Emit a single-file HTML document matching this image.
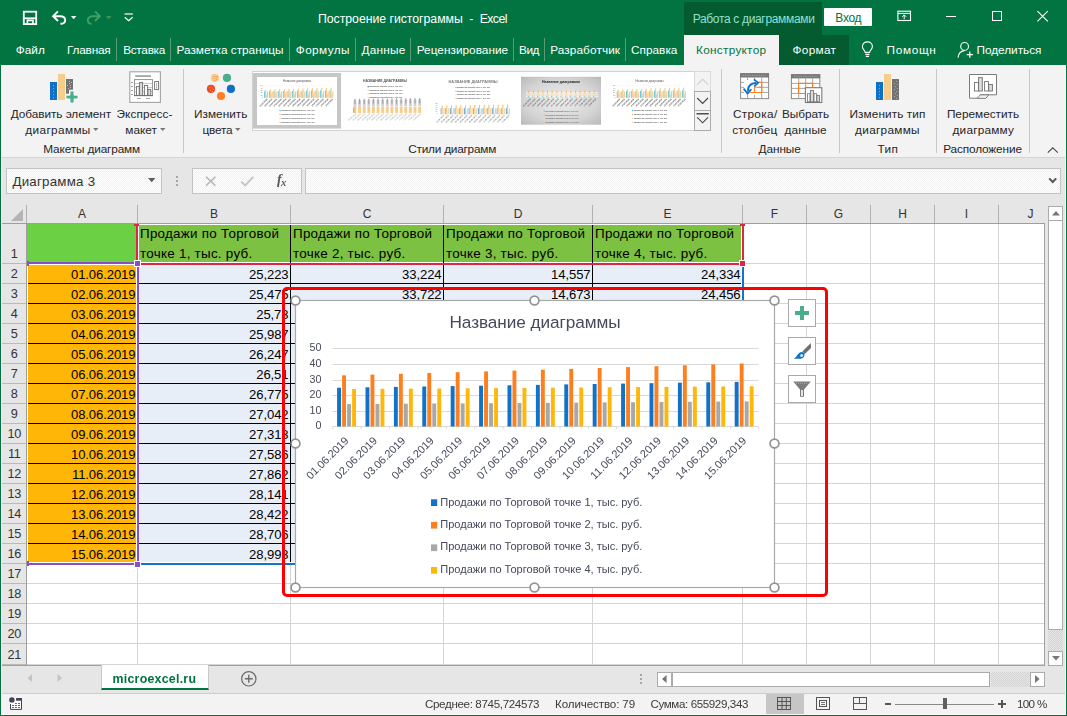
<!DOCTYPE html>
<html lang="ru"><head><meta charset="utf-8"><title>Excel</title>
<style>
*{box-sizing:border-box;margin:0;padding:0}
html,body{width:1067px;height:716px;overflow:hidden;background:#e6e6e6;font-family:"Liberation Sans",sans-serif;}
body{position:relative;font-size:12px;color:#262626}
.a{position:absolute}
.t{position:absolute;white-space:nowrap;line-height:1}
.c{text-align:center}
.r{text-align:right}
svg{position:absolute;overflow:visible}
</style></head>
<body>
<div class="a" style="left:0;top:0;width:1067px;height:65px;background:#017441"></div>
<div class="a" style="left:684px;top:2px;width:138px;height:34px;background:#045b30"></div>
<div class="a" style="left:779px;top:35px;width:70px;height:30px;background:#045b30"></div>
<div class="a" style="left:684px;top:35px;width:95px;height:31px;background:#f3f3f3"></div>
<div class="t" style="left:318.0px;top:12.5px;font-size:12.3px;color:#fff;letter-spacing:-0.04px;">Построение гистограммы</div>
<div class="t" style="left:469.3px;top:12.5px;font-size:12.3px;color:#fff;letter-spacing:1.10px;">-</div>
<div class="t" style="left:479.7px;top:12.5px;font-size:12.3px;color:#fff;letter-spacing:-0.60px;">Excel</div>
<div class="t" style="left:692.7px;top:12.6px;font-size:12px;color:#92e0d0;letter-spacing:-0.33px;">Работа с диаграммами</div>
<div class="a" style="left:824px;top:8px;width:48px;height:18px;background:#fff;border-radius:1px"></div>
<div class="t" style="left:835.3px;top:11.6px;font-size:12px;color:#017441;letter-spacing:-0.29px;">Вход</div>
<div class="t" style="left:15.8px;top:44.5px;font-size:11.8px;color:#fff;letter-spacing:0.02px;">Файл</div>
<div class="t" style="left:67.0px;top:44.5px;font-size:11.8px;color:#fff;letter-spacing:-0.20px;">Главная</div>
<div class="t" style="left:123.2px;top:44.5px;font-size:11.8px;color:#fff;letter-spacing:-0.29px;">Вставка</div>
<div class="t" style="left:176.5px;top:44.5px;font-size:11.8px;color:#fff;letter-spacing:-0.00px;">Разметка страницы</div>
<div class="t" style="left:295.8px;top:44.5px;font-size:11.8px;color:#fff;letter-spacing:0.39px;">Формулы</div>
<div class="t" style="left:361.5px;top:44.5px;font-size:11.8px;color:#fff;letter-spacing:0.23px;">Данные</div>
<div class="t" style="left:416.7px;top:44.5px;font-size:11.8px;color:#fff;letter-spacing:0.03px;">Рецензирование</div>
<div class="t" style="left:519.0px;top:44.5px;font-size:11.8px;color:#fff;letter-spacing:-0.42px;">Вид</div>
<div class="t" style="left:550.2px;top:44.5px;font-size:11.8px;color:#fff;letter-spacing:0.10px;">Разработчик</div>
<div class="t" style="left:630.9px;top:44.5px;font-size:11.8px;color:#fff;letter-spacing:0.04px;">Справка</div>
<div class="a" style="left:116.2px;top:38px;width:1px;height:23px;background:#5b9b77"></div>
<div class="a" style="left:170.1px;top:38px;width:1px;height:23px;background:#5b9b77"></div>
<div class="a" style="left:289.2px;top:38px;width:1px;height:23px;background:#5b9b77"></div>
<div class="a" style="left:354.8px;top:38px;width:1px;height:23px;background:#5b9b77"></div>
<div class="a" style="left:410.2px;top:38px;width:1px;height:23px;background:#5b9b77"></div>
<div class="a" style="left:512.8px;top:38px;width:1px;height:23px;background:#5b9b77"></div>
<div class="a" style="left:544.0px;top:38px;width:1px;height:23px;background:#5b9b77"></div>
<div class="a" style="left:625.2px;top:38px;width:1px;height:23px;background:#5b9b77"></div>
<div class="t" style="left:696.1px;top:44.5px;font-size:11.8px;color:#017441;letter-spacing:0.27px;">Конструктор</div>
<div class="t" style="left:792.5px;top:44.5px;font-size:11.8px;color:#fff;letter-spacing:0.31px;">Формат</div>
<div class="t" style="left:886.5px;top:44.5px;font-size:11.8px;color:#fff;letter-spacing:0.68px;">Помощн</div>
<div class="t" style="left:976.5px;top:44.5px;font-size:11.8px;color:#fff;letter-spacing:-0.02px;">Поделиться</div>
<div class="a" style="left:2px;top:65px;width:1064px;height:92px;background:#f3f3f3"></div>
<div class="a" style="left:2px;top:157px;width:1064px;height:1px;background:#d4d4d4"></div>
<div class="t" style="left:10.7px;top:108.5px;font-size:11.8px;color:#262626;letter-spacing:-0.05px;">Добавить элемент</div>
<div class="t" style="left:25.3px;top:124.9px;font-size:11.8px;color:#262626;letter-spacing:0.36px;">диаграммы</div>
<div class="t" style="left:116.5px;top:108.5px;font-size:11.8px;color:#262626;letter-spacing:0.12px;">Экспресс-</div>
<div class="t" style="left:125.3px;top:124.9px;font-size:11.8px;color:#262626;letter-spacing:0.03px;">макет</div>
<div class="t" style="left:194.0px;top:108.5px;font-size:11.8px;color:#262626;letter-spacing:0.03px;">Изменить</div>
<div class="t" style="left:202.5px;top:124.9px;font-size:11.8px;color:#262626;letter-spacing:-0.18px;">цвета</div>
<div class="t" style="left:43.3px;top:143.5px;font-size:11.8px;color:#262626;letter-spacing:-0.14px;">Макеты диаграмм</div>
<div class="t" style="left:408.3px;top:143.5px;font-size:11.8px;color:#262626;letter-spacing:-0.23px;">Стили диаграмм</div>
<div class="t" style="left:732.9px;top:108.5px;font-size:11.8px;color:#262626;letter-spacing:0.33px;">Строка/</div>
<div class="t" style="left:732.2px;top:124.9px;font-size:11.8px;color:#262626;letter-spacing:0.14px;">столбец</div>
<div class="t" style="left:782.1px;top:108.5px;font-size:11.8px;color:#262626;letter-spacing:-0.09px;">Выбрать</div>
<div class="t" style="left:784.5px;top:124.9px;font-size:11.8px;color:#262626;letter-spacing:0.11px;">данные</div>
<div class="t" style="left:758.5px;top:143.5px;font-size:11.8px;color:#262626;letter-spacing:-0.06px;">Данные</div>
<div class="t" style="left:849.5px;top:108.5px;font-size:11.8px;color:#262626;letter-spacing:0.09px;">Изменить тип</div>
<div class="t" style="left:855.1px;top:124.9px;font-size:11.8px;color:#262626;letter-spacing:0.29px;">диаграммы</div>
<div class="t" style="left:877.5px;top:143.5px;font-size:11.8px;color:#262626;letter-spacing:0.31px;">Тип</div>
<div class="t" style="left:946.9px;top:108.5px;font-size:11.8px;color:#262626;letter-spacing:0.00px;">Переместить</div>
<div class="t" style="left:952.5px;top:124.9px;font-size:11.8px;color:#262626;letter-spacing:0.22px;">диаграмму</div>
<div class="t" style="left:943.2px;top:143.5px;font-size:11.8px;color:#262626;letter-spacing:-0.13px;">Расположение</div>
<svg style="left:93px;top:128px" width="6" height="4"><polygon points="0,0 5.5,0 2.75,3" fill="#777"/></svg>
<svg style="left:160px;top:128px" width="6" height="4"><polygon points="0,0 5.5,0 2.75,3" fill="#777"/></svg>
<svg style="left:235px;top:128px" width="6" height="4"><polygon points="0,0 5.5,0 2.75,3" fill="#777"/></svg>
<div class="a" style="left:183.0px;top:69px;width:1px;height:84px;background:#c8c8c8"></div>
<div class="a" style="left:721.0px;top:69px;width:1px;height:84px;background:#c8c8c8"></div>
<div class="a" style="left:839.0px;top:69px;width:1px;height:84px;background:#c8c8c8"></div>
<div class="a" style="left:936.0px;top:69px;width:1px;height:84px;background:#c8c8c8"></div>
<div class="a" style="left:1028.7px;top:69px;width:1px;height:84px;background:#c8c8c8"></div>
<div class="a" style="left:6px;top:168px;width:156px;height:26px;background:repeating-conic-gradient(#f0f0f0 0% 25%, #ffffff 0% 50%) 0 0/2px 2px;border:1px solid #c3c3c3"></div>
<div class="t" style="left:12.4px;top:174.9px;font-size:13.3px;color:#333;letter-spacing:0.24px;">Диаграмма 3</div>
<div class="a" style="left:192px;top:168px;width:110px;height:26px;background:repeating-conic-gradient(#f0f0f0 0% 25%, #ffffff 0% 50%) 0 0/2px 2px;border:1px solid #c3c3c3"></div>
<div class="a" style="left:305px;top:168px;width:756px;height:26px;background:repeating-conic-gradient(#f0f0f0 0% 25%, #ffffff 0% 50%) 0 0/2px 2px;border:1px solid #c3c3c3"></div>
<div class="a" style="left:2px;top:224px;width:1042px;height:441px;background:#fff"></div>
<div class="a" style="left:2px;top:204px;width:1042px;height:20px;background:#e6e6e6"></div>
<div class="a" style="left:2px;top:224px;width:24px;height:441px;background:#e6e6e6"></div>
<div class="a" style="left:137px;top:224px;width:1px;height:441px;background:#d4d4d4"></div>
<div class="a" style="left:290px;top:224px;width:1px;height:441px;background:#d4d4d4"></div>
<div class="a" style="left:443px;top:224px;width:1px;height:441px;background:#d4d4d4"></div>
<div class="a" style="left:592px;top:224px;width:1px;height:441px;background:#d4d4d4"></div>
<div class="a" style="left:742px;top:224px;width:1px;height:441px;background:#d4d4d4"></div>
<div class="a" style="left:806px;top:224px;width:1px;height:441px;background:#d4d4d4"></div>
<div class="a" style="left:870px;top:224px;width:1px;height:441px;background:#d4d4d4"></div>
<div class="a" style="left:934px;top:224px;width:1px;height:441px;background:#d4d4d4"></div>
<div class="a" style="left:998px;top:224px;width:1px;height:441px;background:#d4d4d4"></div>
<div class="a" style="left:27px;top:263px;width:1017px;height:1px;background:#d4d4d4"></div>
<div class="a" style="left:27px;top:283px;width:1017px;height:1px;background:#d4d4d4"></div>
<div class="a" style="left:27px;top:303px;width:1017px;height:1px;background:#d4d4d4"></div>
<div class="a" style="left:27px;top:323px;width:1017px;height:1px;background:#d4d4d4"></div>
<div class="a" style="left:27px;top:343px;width:1017px;height:1px;background:#d4d4d4"></div>
<div class="a" style="left:27px;top:363px;width:1017px;height:1px;background:#d4d4d4"></div>
<div class="a" style="left:27px;top:383px;width:1017px;height:1px;background:#d4d4d4"></div>
<div class="a" style="left:27px;top:403px;width:1017px;height:1px;background:#d4d4d4"></div>
<div class="a" style="left:27px;top:423px;width:1017px;height:1px;background:#d4d4d4"></div>
<div class="a" style="left:27px;top:443px;width:1017px;height:1px;background:#d4d4d4"></div>
<div class="a" style="left:27px;top:463px;width:1017px;height:1px;background:#d4d4d4"></div>
<div class="a" style="left:27px;top:483px;width:1017px;height:1px;background:#d4d4d4"></div>
<div class="a" style="left:27px;top:503px;width:1017px;height:1px;background:#d4d4d4"></div>
<div class="a" style="left:27px;top:523px;width:1017px;height:1px;background:#d4d4d4"></div>
<div class="a" style="left:27px;top:543px;width:1017px;height:1px;background:#d4d4d4"></div>
<div class="a" style="left:27px;top:563px;width:1017px;height:1px;background:#d4d4d4"></div>
<div class="a" style="left:27px;top:583px;width:1017px;height:1px;background:#d4d4d4"></div>
<div class="a" style="left:27px;top:603px;width:1017px;height:1px;background:#d4d4d4"></div>
<div class="a" style="left:27px;top:623px;width:1017px;height:1px;background:#d4d4d4"></div>
<div class="a" style="left:27px;top:643px;width:1017px;height:1px;background:#d4d4d4"></div>
<div class="a" style="left:27px;top:664px;width:1017px;height:1px;background:#d4d4d4"></div>
<div class="a" style="left:26px;top:205px;width:1px;height:18px;background:#b1b1b1"></div>
<div class="a" style="left:137px;top:205px;width:1px;height:18px;background:#b1b1b1"></div>
<div class="a" style="left:290px;top:205px;width:1px;height:18px;background:#b1b1b1"></div>
<div class="a" style="left:443px;top:205px;width:1px;height:18px;background:#b1b1b1"></div>
<div class="a" style="left:592px;top:205px;width:1px;height:18px;background:#b1b1b1"></div>
<div class="a" style="left:742px;top:205px;width:1px;height:18px;background:#b1b1b1"></div>
<div class="a" style="left:806px;top:205px;width:1px;height:18px;background:#b1b1b1"></div>
<div class="a" style="left:870px;top:205px;width:1px;height:18px;background:#b1b1b1"></div>
<div class="a" style="left:934px;top:205px;width:1px;height:18px;background:#b1b1b1"></div>
<div class="a" style="left:998px;top:205px;width:1px;height:18px;background:#b1b1b1"></div>
<div class="a" style="left:2px;top:223px;width:1042px;height:1px;background:#9e9e9e"></div>
<div class="a" style="left:26px;top:224px;width:1px;height:441px;background:#9e9e9e"></div>
<div class="a" style="left:2px;top:263px;width:24px;height:1px;background:#b9b9b9"></div>
<div class="a" style="left:2px;top:283px;width:24px;height:1px;background:#b9b9b9"></div>
<div class="a" style="left:2px;top:303px;width:24px;height:1px;background:#b9b9b9"></div>
<div class="a" style="left:2px;top:323px;width:24px;height:1px;background:#b9b9b9"></div>
<div class="a" style="left:2px;top:343px;width:24px;height:1px;background:#b9b9b9"></div>
<div class="a" style="left:2px;top:363px;width:24px;height:1px;background:#b9b9b9"></div>
<div class="a" style="left:2px;top:383px;width:24px;height:1px;background:#b9b9b9"></div>
<div class="a" style="left:2px;top:403px;width:24px;height:1px;background:#b9b9b9"></div>
<div class="a" style="left:2px;top:423px;width:24px;height:1px;background:#b9b9b9"></div>
<div class="a" style="left:2px;top:443px;width:24px;height:1px;background:#b9b9b9"></div>
<div class="a" style="left:2px;top:463px;width:24px;height:1px;background:#b9b9b9"></div>
<div class="a" style="left:2px;top:483px;width:24px;height:1px;background:#b9b9b9"></div>
<div class="a" style="left:2px;top:503px;width:24px;height:1px;background:#b9b9b9"></div>
<div class="a" style="left:2px;top:523px;width:24px;height:1px;background:#b9b9b9"></div>
<div class="a" style="left:2px;top:543px;width:24px;height:1px;background:#b9b9b9"></div>
<div class="a" style="left:2px;top:563px;width:24px;height:1px;background:#b9b9b9"></div>
<div class="a" style="left:2px;top:583px;width:24px;height:1px;background:#b9b9b9"></div>
<div class="a" style="left:2px;top:603px;width:24px;height:1px;background:#b9b9b9"></div>
<div class="a" style="left:2px;top:623px;width:24px;height:1px;background:#b9b9b9"></div>
<div class="a" style="left:2px;top:643px;width:24px;height:1px;background:#b9b9b9"></div>
<div class="a" style="left:2px;top:664px;width:24px;height:1px;background:#b9b9b9"></div>
<div class="a" style="left:1044px;top:223px;width:1px;height:442px;background:#a0a0a0"></div>
<div class="a" style="left:2px;top:665px;width:1043px;height:1px;background:#a0a0a0"></div>
<div class="t c" style="left:27px;top:208px;width:110px;font-size:12px;color:#333">A</div>
<div class="t c" style="left:138px;top:208px;width:152px;font-size:12px;color:#333">B</div>
<div class="t c" style="left:291px;top:208px;width:152px;font-size:12px;color:#333">C</div>
<div class="t c" style="left:444px;top:208px;width:148px;font-size:12px;color:#333">D</div>
<div class="t c" style="left:593px;top:208px;width:149px;font-size:12px;color:#333">E</div>
<div class="t c" style="left:743px;top:208px;width:63px;font-size:12px;color:#333">F</div>
<div class="t c" style="left:807px;top:208px;width:63px;font-size:12px;color:#333">G</div>
<div class="t c" style="left:871px;top:208px;width:63px;font-size:12px;color:#333">H</div>
<div class="t c" style="left:935px;top:208px;width:63px;font-size:12px;color:#333">I</div>
<div class="t c" style="left:999px;top:208px;width:63px;font-size:12px;color:#333">J</div>
<div class="t c" style="left:2px;top:248.25px;width:24.6px;font-size:12.7px;color:#333;letter-spacing:-0.2px">1</div>
<div class="t c" style="left:2px;top:268.25px;width:24.6px;font-size:12.7px;color:#333;letter-spacing:-0.2px">2</div>
<div class="t c" style="left:2px;top:288.25px;width:24.6px;font-size:12.7px;color:#333;letter-spacing:-0.2px">3</div>
<div class="t c" style="left:2px;top:308.25px;width:24.6px;font-size:12.7px;color:#333;letter-spacing:-0.2px">4</div>
<div class="t c" style="left:2px;top:328.25px;width:24.6px;font-size:12.7px;color:#333;letter-spacing:-0.2px">5</div>
<div class="t c" style="left:2px;top:348.25px;width:24.6px;font-size:12.7px;color:#333;letter-spacing:-0.2px">6</div>
<div class="t c" style="left:2px;top:368.25px;width:24.6px;font-size:12.7px;color:#333;letter-spacing:-0.2px">7</div>
<div class="t c" style="left:2px;top:388.25px;width:24.6px;font-size:12.7px;color:#333;letter-spacing:-0.2px">8</div>
<div class="t c" style="left:2px;top:408.25px;width:24.6px;font-size:12.7px;color:#333;letter-spacing:-0.2px">9</div>
<div class="t c" style="left:2px;top:428.25px;width:24.6px;font-size:12.7px;color:#333;letter-spacing:-0.2px">10</div>
<div class="t c" style="left:2px;top:448.25px;width:24.6px;font-size:12.7px;color:#333;letter-spacing:-0.2px">11</div>
<div class="t c" style="left:2px;top:468.25px;width:24.6px;font-size:12.7px;color:#333;letter-spacing:-0.2px">12</div>
<div class="t c" style="left:2px;top:488.25px;width:24.6px;font-size:12.7px;color:#333;letter-spacing:-0.2px">13</div>
<div class="t c" style="left:2px;top:508.25px;width:24.6px;font-size:12.7px;color:#333;letter-spacing:-0.2px">14</div>
<div class="t c" style="left:2px;top:528.25px;width:24.6px;font-size:12.7px;color:#333;letter-spacing:-0.2px">15</div>
<div class="t c" style="left:2px;top:548.25px;width:24.6px;font-size:12.7px;color:#333;letter-spacing:-0.2px">16</div>
<div class="t c" style="left:2px;top:568.25px;width:24.6px;font-size:12.7px;color:#333;letter-spacing:-0.2px">17</div>
<div class="t c" style="left:2px;top:588.25px;width:24.6px;font-size:12.7px;color:#333;letter-spacing:-0.2px">18</div>
<div class="t c" style="left:2px;top:608.25px;width:24.6px;font-size:12.7px;color:#333;letter-spacing:-0.2px">19</div>
<div class="t c" style="left:2px;top:628.25px;width:24.6px;font-size:12.7px;color:#333;letter-spacing:-0.2px">20</div>
<div class="t c" style="left:2px;top:649.25px;width:24.6px;font-size:12.7px;color:#333;letter-spacing:-0.2px">21</div>
<svg style="left:10px;top:208px" width="14" height="14"><polygon points="13,1 13,13 1,13" fill="#b4b4b4"/></svg>
<div class="a" style="left:27px;top:224px;width:715px;height:341px;background:#fff"></div>
<div class="a" style="left:27px;top:224px;width:109px;height:38px;background:#6bd044"></div>
<div class="a" style="left:139px;top:225px;width:602px;height:37px;background:#7dc142"></div>
<div class="a" style="left:28px;top:265px;width:108px;height:297px;background:#ffb606"></div>
<div class="a" style="left:139px;top:265px;width:602px;height:297px;background:#e8eef8"></div>
<div class="a" style="left:28px;top:283px;width:108px;height:1px;background:#000"></div>
<div class="a" style="left:139px;top:283px;width:602px;height:1px;background:#000"></div>
<div class="a" style="left:28px;top:303px;width:108px;height:1px;background:#000"></div>
<div class="a" style="left:139px;top:303px;width:602px;height:1px;background:#000"></div>
<div class="a" style="left:28px;top:323px;width:108px;height:1px;background:#000"></div>
<div class="a" style="left:139px;top:323px;width:602px;height:1px;background:#000"></div>
<div class="a" style="left:28px;top:343px;width:108px;height:1px;background:#000"></div>
<div class="a" style="left:139px;top:343px;width:602px;height:1px;background:#000"></div>
<div class="a" style="left:28px;top:363px;width:108px;height:1px;background:#000"></div>
<div class="a" style="left:139px;top:363px;width:602px;height:1px;background:#000"></div>
<div class="a" style="left:28px;top:383px;width:108px;height:1px;background:#000"></div>
<div class="a" style="left:139px;top:383px;width:602px;height:1px;background:#000"></div>
<div class="a" style="left:28px;top:403px;width:108px;height:1px;background:#000"></div>
<div class="a" style="left:139px;top:403px;width:602px;height:1px;background:#000"></div>
<div class="a" style="left:28px;top:423px;width:108px;height:1px;background:#000"></div>
<div class="a" style="left:139px;top:423px;width:602px;height:1px;background:#000"></div>
<div class="a" style="left:28px;top:443px;width:108px;height:1px;background:#000"></div>
<div class="a" style="left:139px;top:443px;width:602px;height:1px;background:#000"></div>
<div class="a" style="left:28px;top:463px;width:108px;height:1px;background:#000"></div>
<div class="a" style="left:139px;top:463px;width:602px;height:1px;background:#000"></div>
<div class="a" style="left:28px;top:483px;width:108px;height:1px;background:#000"></div>
<div class="a" style="left:139px;top:483px;width:602px;height:1px;background:#000"></div>
<div class="a" style="left:28px;top:503px;width:108px;height:1px;background:#000"></div>
<div class="a" style="left:139px;top:503px;width:602px;height:1px;background:#000"></div>
<div class="a" style="left:28px;top:523px;width:108px;height:1px;background:#000"></div>
<div class="a" style="left:139px;top:523px;width:602px;height:1px;background:#000"></div>
<div class="a" style="left:28px;top:543px;width:108px;height:1px;background:#000"></div>
<div class="a" style="left:139px;top:543px;width:602px;height:1px;background:#000"></div>
<div class="a" style="left:290px;top:225px;width:1px;height:337px;background:#000"></div>
<div class="a" style="left:443px;top:225px;width:1px;height:337px;background:#000"></div>
<div class="a" style="left:592px;top:225px;width:1px;height:337px;background:#000"></div>
<div class="t" style="left:140px;top:224px;font-size:13.4px;color:#000;line-height:20px;letter-spacing:0.27px">Продажи по Торговой<br>точке 1, тыс. руб.</div>
<div class="t" style="left:293px;top:224px;font-size:13.4px;color:#000;line-height:20px;letter-spacing:0.27px">Продажи по Торговой<br>точке 2, тыс. руб.</div>
<div class="t" style="left:446px;top:224px;font-size:13.4px;color:#000;line-height:20px;letter-spacing:0.27px">Продажи по Торговой<br>точке 3, тыс. руб.</div>
<div class="t" style="left:595px;top:224px;font-size:13.4px;color:#000;line-height:20px;letter-spacing:0.27px">Продажи по Торговой<br>точке 4, тыс. руб.</div>
<div class="t r" style="left:27px;top:264.6px;width:108.5px;font-size:13.1px;color:#000;line-height:20px;letter-spacing:-0.1px">01.06.2019</div>
<div class="t r" style="left:138px;top:264.6px;width:150.5px;font-size:13.1px;color:#000;line-height:20px;letter-spacing:-0.1px">25,223</div>
<div class="t r" style="left:291px;top:264.6px;width:150.5px;font-size:13.1px;color:#000;line-height:20px;letter-spacing:-0.1px">33,224</div>
<div class="t r" style="left:444px;top:264.6px;width:146.5px;font-size:13.1px;color:#000;line-height:20px;letter-spacing:-0.1px">14,557</div>
<div class="t r" style="left:593px;top:264.6px;width:147.5px;font-size:13.1px;color:#000;line-height:20px;letter-spacing:-0.1px">24,334</div>
<div class="t r" style="left:27px;top:284.6px;width:108.5px;font-size:13.1px;color:#000;line-height:20px;letter-spacing:-0.1px">02.06.2019</div>
<div class="t r" style="left:138px;top:284.6px;width:150.5px;font-size:13.1px;color:#000;line-height:20px;letter-spacing:-0.1px">25,475</div>
<div class="t r" style="left:291px;top:284.6px;width:150.5px;font-size:13.1px;color:#000;line-height:20px;letter-spacing:-0.1px">33,722</div>
<div class="t r" style="left:444px;top:284.6px;width:146.5px;font-size:13.1px;color:#000;line-height:20px;letter-spacing:-0.1px">14,673</div>
<div class="t r" style="left:593px;top:284.6px;width:147.5px;font-size:13.1px;color:#000;line-height:20px;letter-spacing:-0.1px">24,456</div>
<div class="t r" style="left:27px;top:304.6px;width:108.5px;font-size:13.1px;color:#000;line-height:20px;letter-spacing:-0.1px">03.06.2019</div>
<div class="t r" style="left:138px;top:304.6px;width:150.5px;font-size:13.1px;color:#000;line-height:20px;letter-spacing:-0.1px">25,73</div>
<div class="t r" style="left:291px;top:304.6px;width:150.5px;font-size:13.1px;color:#000;line-height:20px;letter-spacing:-0.1px">34,228</div>
<div class="t r" style="left:444px;top:304.6px;width:146.5px;font-size:13.1px;color:#000;line-height:20px;letter-spacing:-0.1px">14,791</div>
<div class="t r" style="left:593px;top:304.6px;width:147.5px;font-size:13.1px;color:#000;line-height:20px;letter-spacing:-0.1px">24,578</div>
<div class="t r" style="left:27px;top:324.6px;width:108.5px;font-size:13.1px;color:#000;line-height:20px;letter-spacing:-0.1px">04.06.2019</div>
<div class="t r" style="left:138px;top:324.6px;width:150.5px;font-size:13.1px;color:#000;line-height:20px;letter-spacing:-0.1px">25,987</div>
<div class="t r" style="left:291px;top:324.6px;width:150.5px;font-size:13.1px;color:#000;line-height:20px;letter-spacing:-0.1px">34,742</div>
<div class="t r" style="left:444px;top:324.6px;width:146.5px;font-size:13.1px;color:#000;line-height:20px;letter-spacing:-0.1px">14,909</div>
<div class="t r" style="left:593px;top:324.6px;width:147.5px;font-size:13.1px;color:#000;line-height:20px;letter-spacing:-0.1px">24,701</div>
<div class="t r" style="left:27px;top:344.6px;width:108.5px;font-size:13.1px;color:#000;line-height:20px;letter-spacing:-0.1px">05.06.2019</div>
<div class="t r" style="left:138px;top:344.6px;width:150.5px;font-size:13.1px;color:#000;line-height:20px;letter-spacing:-0.1px">26,247</div>
<div class="t r" style="left:291px;top:344.6px;width:150.5px;font-size:13.1px;color:#000;line-height:20px;letter-spacing:-0.1px">35,263</div>
<div class="t r" style="left:444px;top:344.6px;width:146.5px;font-size:13.1px;color:#000;line-height:20px;letter-spacing:-0.1px">15,028</div>
<div class="t r" style="left:593px;top:344.6px;width:147.5px;font-size:13.1px;color:#000;line-height:20px;letter-spacing:-0.1px">24,824</div>
<div class="t r" style="left:27px;top:364.6px;width:108.5px;font-size:13.1px;color:#000;line-height:20px;letter-spacing:-0.1px">06.06.2019</div>
<div class="t r" style="left:138px;top:364.6px;width:150.5px;font-size:13.1px;color:#000;line-height:20px;letter-spacing:-0.1px">26,51</div>
<div class="t r" style="left:291px;top:364.6px;width:150.5px;font-size:13.1px;color:#000;line-height:20px;letter-spacing:-0.1px">35,792</div>
<div class="t r" style="left:444px;top:364.6px;width:146.5px;font-size:13.1px;color:#000;line-height:20px;letter-spacing:-0.1px">15,149</div>
<div class="t r" style="left:593px;top:364.6px;width:147.5px;font-size:13.1px;color:#000;line-height:20px;letter-spacing:-0.1px">24,948</div>
<div class="t r" style="left:27px;top:384.6px;width:108.5px;font-size:13.1px;color:#000;line-height:20px;letter-spacing:-0.1px">07.06.2019</div>
<div class="t r" style="left:138px;top:384.6px;width:150.5px;font-size:13.1px;color:#000;line-height:20px;letter-spacing:-0.1px">26,775</div>
<div class="t r" style="left:291px;top:384.6px;width:150.5px;font-size:13.1px;color:#000;line-height:20px;letter-spacing:-0.1px">36,329</div>
<div class="t r" style="left:444px;top:384.6px;width:146.5px;font-size:13.1px;color:#000;line-height:20px;letter-spacing:-0.1px">15,27</div>
<div class="t r" style="left:593px;top:384.6px;width:147.5px;font-size:13.1px;color:#000;line-height:20px;letter-spacing:-0.1px">25,073</div>
<div class="t r" style="left:27px;top:404.6px;width:108.5px;font-size:13.1px;color:#000;line-height:20px;letter-spacing:-0.1px">08.06.2019</div>
<div class="t r" style="left:138px;top:404.6px;width:150.5px;font-size:13.1px;color:#000;line-height:20px;letter-spacing:-0.1px">27,042</div>
<div class="t r" style="left:291px;top:404.6px;width:150.5px;font-size:13.1px;color:#000;line-height:20px;letter-spacing:-0.1px">36,873</div>
<div class="t r" style="left:444px;top:404.6px;width:146.5px;font-size:13.1px;color:#000;line-height:20px;letter-spacing:-0.1px">15,392</div>
<div class="t r" style="left:593px;top:404.6px;width:147.5px;font-size:13.1px;color:#000;line-height:20px;letter-spacing:-0.1px">25,199</div>
<div class="t r" style="left:27px;top:424.6px;width:108.5px;font-size:13.1px;color:#000;line-height:20px;letter-spacing:-0.1px">09.06.2019</div>
<div class="t r" style="left:138px;top:424.6px;width:150.5px;font-size:13.1px;color:#000;line-height:20px;letter-spacing:-0.1px">27,313</div>
<div class="t r" style="left:291px;top:424.6px;width:150.5px;font-size:13.1px;color:#000;line-height:20px;letter-spacing:-0.1px">37,427</div>
<div class="t r" style="left:444px;top:424.6px;width:146.5px;font-size:13.1px;color:#000;line-height:20px;letter-spacing:-0.1px">15,515</div>
<div class="t r" style="left:593px;top:424.6px;width:147.5px;font-size:13.1px;color:#000;line-height:20px;letter-spacing:-0.1px">25,325</div>
<div class="t r" style="left:27px;top:444.6px;width:108.5px;font-size:13.1px;color:#000;line-height:20px;letter-spacing:-0.1px">10.06.2019</div>
<div class="t r" style="left:138px;top:444.6px;width:150.5px;font-size:13.1px;color:#000;line-height:20px;letter-spacing:-0.1px">27,586</div>
<div class="t r" style="left:291px;top:444.6px;width:150.5px;font-size:13.1px;color:#000;line-height:20px;letter-spacing:-0.1px">37,988</div>
<div class="t r" style="left:444px;top:444.6px;width:146.5px;font-size:13.1px;color:#000;line-height:20px;letter-spacing:-0.1px">15,639</div>
<div class="t r" style="left:593px;top:444.6px;width:147.5px;font-size:13.1px;color:#000;line-height:20px;letter-spacing:-0.1px">25,451</div>
<div class="t r" style="left:27px;top:464.6px;width:108.5px;font-size:13.1px;color:#000;line-height:20px;letter-spacing:-0.1px">11.06.2019</div>
<div class="t r" style="left:138px;top:464.6px;width:150.5px;font-size:13.1px;color:#000;line-height:20px;letter-spacing:-0.1px">27,862</div>
<div class="t r" style="left:291px;top:464.6px;width:150.5px;font-size:13.1px;color:#000;line-height:20px;letter-spacing:-0.1px">38,558</div>
<div class="t r" style="left:444px;top:464.6px;width:146.5px;font-size:13.1px;color:#000;line-height:20px;letter-spacing:-0.1px">15,764</div>
<div class="t r" style="left:593px;top:464.6px;width:147.5px;font-size:13.1px;color:#000;line-height:20px;letter-spacing:-0.1px">25,578</div>
<div class="t r" style="left:27px;top:484.6px;width:108.5px;font-size:13.1px;color:#000;line-height:20px;letter-spacing:-0.1px">12.06.2019</div>
<div class="t r" style="left:138px;top:484.6px;width:150.5px;font-size:13.1px;color:#000;line-height:20px;letter-spacing:-0.1px">28,141</div>
<div class="t r" style="left:291px;top:484.6px;width:150.5px;font-size:13.1px;color:#000;line-height:20px;letter-spacing:-0.1px">39,136</div>
<div class="t r" style="left:444px;top:484.6px;width:146.5px;font-size:13.1px;color:#000;line-height:20px;letter-spacing:-0.1px">15,891</div>
<div class="t r" style="left:593px;top:484.6px;width:147.5px;font-size:13.1px;color:#000;line-height:20px;letter-spacing:-0.1px">25,706</div>
<div class="t r" style="left:27px;top:504.6px;width:108.5px;font-size:13.1px;color:#000;line-height:20px;letter-spacing:-0.1px">13.06.2019</div>
<div class="t r" style="left:138px;top:504.6px;width:150.5px;font-size:13.1px;color:#000;line-height:20px;letter-spacing:-0.1px">28,422</div>
<div class="t r" style="left:291px;top:504.6px;width:150.5px;font-size:13.1px;color:#000;line-height:20px;letter-spacing:-0.1px">39,723</div>
<div class="t r" style="left:444px;top:504.6px;width:146.5px;font-size:13.1px;color:#000;line-height:20px;letter-spacing:-0.1px">16,018</div>
<div class="t r" style="left:593px;top:504.6px;width:147.5px;font-size:13.1px;color:#000;line-height:20px;letter-spacing:-0.1px">25,835</div>
<div class="t r" style="left:27px;top:524.6px;width:108.5px;font-size:13.1px;color:#000;line-height:20px;letter-spacing:-0.1px">14.06.2019</div>
<div class="t r" style="left:138px;top:524.6px;width:150.5px;font-size:13.1px;color:#000;line-height:20px;letter-spacing:-0.1px">28,706</div>
<div class="t r" style="left:291px;top:524.6px;width:150.5px;font-size:13.1px;color:#000;line-height:20px;letter-spacing:-0.1px">40,319</div>
<div class="t r" style="left:444px;top:524.6px;width:146.5px;font-size:13.1px;color:#000;line-height:20px;letter-spacing:-0.1px">16,146</div>
<div class="t r" style="left:593px;top:524.6px;width:147.5px;font-size:13.1px;color:#000;line-height:20px;letter-spacing:-0.1px">25,964</div>
<div class="t r" style="left:27px;top:544.6px;width:108.5px;font-size:13.1px;color:#000;line-height:20px;letter-spacing:-0.1px">15.06.2019</div>
<div class="t r" style="left:138px;top:544.6px;width:150.5px;font-size:13.1px;color:#000;line-height:20px;letter-spacing:-0.1px">28,993</div>
<div class="t r" style="left:291px;top:544.6px;width:150.5px;font-size:13.1px;color:#000;line-height:20px;letter-spacing:-0.1px">40,924</div>
<div class="t r" style="left:444px;top:544.6px;width:146.5px;font-size:13.1px;color:#000;line-height:20px;letter-spacing:-0.1px">16,275</div>
<div class="t r" style="left:593px;top:544.6px;width:147.5px;font-size:13.1px;color:#000;line-height:20px;letter-spacing:-0.1px">26,094</div>
<div class="a" style="left:27px;top:262px;width:108px;height:2px;background:#8a4fc0"></div>
<div class="a" style="left:137px;top:266px;width:2px;height:296px;background:#8a4fc0"></div>
<div class="a" style="left:29px;top:563px;width:106px;height:2px;background:#8a4fc0"></div>
<div class="a" style="left:136px;top:226px;width:2px;height:35px;background:#dc2840"></div>
<div class="a" style="left:141px;top:263px;width:599px;height:2px;background:#dc2840"></div>
<div class="a" style="left:742px;top:226px;width:2px;height:35px;background:#dc2840"></div>
<div class="a" style="left:742px;top:267px;width:2px;height:298px;background:#1173c9"></div>
<div class="a" style="left:141px;top:563px;width:603px;height:2px;background:#1173c9"></div>
<div class="a" style="left:134px;top:260px;width:7px;height:7px;background:#fff"></div>
<div class="a" style="left:135px;top:261px;width:5px;height:5px;background:#8a4fc0"></div>
<div class="a" style="left:134px;top:561px;width:7px;height:7px;background:#fff"></div>
<div class="a" style="left:135px;top:562px;width:5px;height:5px;background:#8a4fc0"></div>
<div class="a" style="left:739px;top:260px;width:7px;height:7px;background:#fff"></div>
<div class="a" style="left:740px;top:261px;width:5px;height:5px;background:#dc2840"></div>
<div class="a" style="left:27px;top:261px;width:2px;height:5px;background:#8a4fc0"></div>
<div class="a" style="left:27px;top:561px;width:2px;height:5px;background:#8a4fc0"></div>
<div class="a" style="left:134px;top:224px;width:5px;height:2px;background:#dc2840"></div>
<div class="a" style="left:740px;top:224px;width:5px;height:2px;background:#dc2840"></div>
<svg style="left:0;top:0;will-change:transform" width="1067" height="716" viewBox="0 0 1067 716" font-family="Liberation Sans, sans-serif">
<rect x="295.5" y="300.5" width="479.0" height="287.0" fill="#fff" stroke="#a9a9a9" stroke-width="1.2"/>
<text x="535" y="328.3" font-size="17.2" fill="#464a5a" text-anchor="middle" textLength="171" lengthAdjust="spacing">Название диаграммы</text>
<line x1="332.8" y1="426.5" x2="758.8" y2="426.5" stroke="#d9d9d9" stroke-width="1"/>
<text x="321.5" y="429.1" font-size="10.7" fill="#464a5a" text-anchor="end">0</text>
<line x1="332.8" y1="411.5" x2="758.8" y2="411.5" stroke="#d9d9d9" stroke-width="1"/>
<text x="321.5" y="414.1" font-size="10.7" fill="#464a5a" text-anchor="end">10</text>
<line x1="332.8" y1="395.5" x2="758.8" y2="395.5" stroke="#d9d9d9" stroke-width="1"/>
<text x="321.5" y="398.1" font-size="10.7" fill="#464a5a" text-anchor="end">20</text>
<line x1="332.8" y1="380.5" x2="758.8" y2="380.5" stroke="#d9d9d9" stroke-width="1"/>
<text x="321.5" y="383.1" font-size="10.7" fill="#464a5a" text-anchor="end">30</text>
<line x1="332.8" y1="364.5" x2="758.8" y2="364.5" stroke="#d9d9d9" stroke-width="1"/>
<text x="321.5" y="367.1" font-size="10.7" fill="#464a5a" text-anchor="end">40</text>
<line x1="332.8" y1="348.5" x2="758.8" y2="348.5" stroke="#d9d9d9" stroke-width="1"/>
<text x="321.5" y="351.1" font-size="10.7" fill="#464a5a" text-anchor="end">50</text>
<line x1="332.8" y1="426.7" x2="332.8" y2="429.2" stroke="#d9d9d9" stroke-width="1"/>
<line x1="361.2" y1="426.7" x2="361.2" y2="429.2" stroke="#d9d9d9" stroke-width="1"/>
<line x1="389.6" y1="426.7" x2="389.6" y2="429.2" stroke="#d9d9d9" stroke-width="1"/>
<line x1="418.0" y1="426.7" x2="418.0" y2="429.2" stroke="#d9d9d9" stroke-width="1"/>
<line x1="446.4" y1="426.7" x2="446.4" y2="429.2" stroke="#d9d9d9" stroke-width="1"/>
<line x1="474.8" y1="426.7" x2="474.8" y2="429.2" stroke="#d9d9d9" stroke-width="1"/>
<line x1="503.2" y1="426.7" x2="503.2" y2="429.2" stroke="#d9d9d9" stroke-width="1"/>
<line x1="531.6" y1="426.7" x2="531.6" y2="429.2" stroke="#d9d9d9" stroke-width="1"/>
<line x1="560.0" y1="426.7" x2="560.0" y2="429.2" stroke="#d9d9d9" stroke-width="1"/>
<line x1="588.4" y1="426.7" x2="588.4" y2="429.2" stroke="#d9d9d9" stroke-width="1"/>
<line x1="616.8" y1="426.7" x2="616.8" y2="429.2" stroke="#d9d9d9" stroke-width="1"/>
<line x1="645.2" y1="426.7" x2="645.2" y2="429.2" stroke="#d9d9d9" stroke-width="1"/>
<line x1="673.6" y1="426.7" x2="673.6" y2="429.2" stroke="#d9d9d9" stroke-width="1"/>
<line x1="702.0" y1="426.7" x2="702.0" y2="429.2" stroke="#d9d9d9" stroke-width="1"/>
<line x1="730.4" y1="426.7" x2="730.4" y2="429.2" stroke="#d9d9d9" stroke-width="1"/>
<line x1="758.8" y1="426.7" x2="758.8" y2="429.2" stroke="#d9d9d9" stroke-width="1"/>
<rect x="337.1" y="387.7" width="3.9" height="38.8" fill="#1072c8"/>
<rect x="342.1" y="375.3" width="3.9" height="51.2" fill="#ff7f1e"/>
<rect x="347.1" y="404.1" width="3.9" height="22.4" fill="#a8a8a8"/>
<rect x="352.1" y="389.0" width="3.9" height="37.5" fill="#ffb70a"/>
<text transform="translate(349.4 441.3) rotate(-45)" font-size="11" fill="#464a5a" text-anchor="end" textLength="54.6" lengthAdjust="spacing">01.06.2019</text>
<rect x="365.5" y="387.3" width="3.9" height="39.2" fill="#1072c8"/>
<rect x="370.5" y="374.6" width="3.9" height="51.9" fill="#ff7f1e"/>
<rect x="375.5" y="403.9" width="3.9" height="22.6" fill="#a8a8a8"/>
<rect x="380.5" y="388.8" width="3.9" height="37.7" fill="#ffb70a"/>
<text transform="translate(377.8 441.3) rotate(-45)" font-size="11" fill="#464a5a" text-anchor="end" textLength="54.6" lengthAdjust="spacing">02.06.2019</text>
<rect x="393.9" y="386.9" width="3.9" height="39.6" fill="#1072c8"/>
<rect x="398.9" y="373.8" width="3.9" height="52.7" fill="#ff7f1e"/>
<rect x="403.9" y="403.7" width="3.9" height="22.8" fill="#a8a8a8"/>
<rect x="408.9" y="388.6" width="3.9" height="37.9" fill="#ffb70a"/>
<text transform="translate(406.2 441.3) rotate(-45)" font-size="11" fill="#464a5a" text-anchor="end" textLength="54.6" lengthAdjust="spacing">03.06.2019</text>
<rect x="422.3" y="386.5" width="3.9" height="40.0" fill="#1072c8"/>
<rect x="427.3" y="373.0" width="3.9" height="53.5" fill="#ff7f1e"/>
<rect x="432.3" y="403.5" width="3.9" height="23.0" fill="#a8a8a8"/>
<rect x="437.3" y="388.5" width="3.9" height="38.0" fill="#ffb70a"/>
<text transform="translate(434.6 441.3) rotate(-45)" font-size="11" fill="#464a5a" text-anchor="end" textLength="54.6" lengthAdjust="spacing">04.06.2019</text>
<rect x="450.7" y="386.1" width="3.9" height="40.4" fill="#1072c8"/>
<rect x="455.7" y="372.2" width="3.9" height="54.3" fill="#ff7f1e"/>
<rect x="460.7" y="403.4" width="3.9" height="23.1" fill="#a8a8a8"/>
<rect x="465.7" y="388.3" width="3.9" height="38.2" fill="#ffb70a"/>
<text transform="translate(463.0 441.3) rotate(-45)" font-size="11" fill="#464a5a" text-anchor="end" textLength="54.6" lengthAdjust="spacing">05.06.2019</text>
<rect x="479.1" y="385.7" width="3.9" height="40.8" fill="#1072c8"/>
<rect x="484.1" y="371.4" width="3.9" height="55.1" fill="#ff7f1e"/>
<rect x="489.1" y="403.2" width="3.9" height="23.3" fill="#a8a8a8"/>
<rect x="494.1" y="388.1" width="3.9" height="38.4" fill="#ffb70a"/>
<text transform="translate(491.4 441.3) rotate(-45)" font-size="11" fill="#464a5a" text-anchor="end" textLength="54.6" lengthAdjust="spacing">06.06.2019</text>
<rect x="507.5" y="385.3" width="3.9" height="41.2" fill="#1072c8"/>
<rect x="512.5" y="370.6" width="3.9" height="55.9" fill="#ff7f1e"/>
<rect x="517.5" y="403.0" width="3.9" height="23.5" fill="#a8a8a8"/>
<rect x="522.5" y="387.9" width="3.9" height="38.6" fill="#ffb70a"/>
<text transform="translate(519.8 441.3) rotate(-45)" font-size="11" fill="#464a5a" text-anchor="end" textLength="54.6" lengthAdjust="spacing">07.06.2019</text>
<rect x="535.9" y="384.9" width="3.9" height="41.6" fill="#1072c8"/>
<rect x="540.9" y="369.7" width="3.9" height="56.8" fill="#ff7f1e"/>
<rect x="545.9" y="402.8" width="3.9" height="23.7" fill="#a8a8a8"/>
<rect x="550.9" y="387.7" width="3.9" height="38.8" fill="#ffb70a"/>
<text transform="translate(548.2 441.3) rotate(-45)" font-size="11" fill="#464a5a" text-anchor="end" textLength="54.6" lengthAdjust="spacing">08.06.2019</text>
<rect x="564.3" y="384.4" width="3.9" height="42.1" fill="#1072c8"/>
<rect x="569.3" y="368.9" width="3.9" height="57.6" fill="#ff7f1e"/>
<rect x="574.3" y="402.6" width="3.9" height="23.9" fill="#a8a8a8"/>
<rect x="579.3" y="387.5" width="3.9" height="39.0" fill="#ffb70a"/>
<text transform="translate(576.6 441.3) rotate(-45)" font-size="11" fill="#464a5a" text-anchor="end" textLength="54.6" lengthAdjust="spacing">09.06.2019</text>
<rect x="592.7" y="384.0" width="3.9" height="42.5" fill="#1072c8"/>
<rect x="597.7" y="368.0" width="3.9" height="58.5" fill="#ff7f1e"/>
<rect x="602.7" y="402.4" width="3.9" height="24.1" fill="#a8a8a8"/>
<rect x="607.7" y="387.3" width="3.9" height="39.2" fill="#ffb70a"/>
<text transform="translate(605.0 441.3) rotate(-45)" font-size="11" fill="#464a5a" text-anchor="end" textLength="54.6" lengthAdjust="spacing">10.06.2019</text>
<rect x="621.1" y="383.6" width="3.9" height="42.9" fill="#1072c8"/>
<rect x="626.1" y="367.1" width="3.9" height="59.4" fill="#ff7f1e"/>
<rect x="631.1" y="402.2" width="3.9" height="24.3" fill="#a8a8a8"/>
<rect x="636.1" y="387.1" width="3.9" height="39.4" fill="#ffb70a"/>
<text transform="translate(633.4 441.3) rotate(-45)" font-size="11" fill="#464a5a" text-anchor="end" textLength="54.6" lengthAdjust="spacing">11.06.2019</text>
<rect x="649.5" y="383.2" width="3.9" height="43.3" fill="#1072c8"/>
<rect x="654.5" y="366.2" width="3.9" height="60.3" fill="#ff7f1e"/>
<rect x="659.5" y="402.0" width="3.9" height="24.5" fill="#a8a8a8"/>
<rect x="664.5" y="386.9" width="3.9" height="39.6" fill="#ffb70a"/>
<text transform="translate(661.8 441.3) rotate(-45)" font-size="11" fill="#464a5a" text-anchor="end" textLength="54.6" lengthAdjust="spacing">12.06.2019</text>
<rect x="677.9" y="382.7" width="3.9" height="43.8" fill="#1072c8"/>
<rect x="682.9" y="365.3" width="3.9" height="61.2" fill="#ff7f1e"/>
<rect x="687.9" y="401.8" width="3.9" height="24.7" fill="#a8a8a8"/>
<rect x="692.9" y="386.7" width="3.9" height="39.8" fill="#ffb70a"/>
<text transform="translate(690.2 441.3) rotate(-45)" font-size="11" fill="#464a5a" text-anchor="end" textLength="54.6" lengthAdjust="spacing">13.06.2019</text>
<rect x="706.3" y="382.3" width="3.9" height="44.2" fill="#1072c8"/>
<rect x="711.3" y="364.4" width="3.9" height="62.1" fill="#ff7f1e"/>
<rect x="716.3" y="401.6" width="3.9" height="24.9" fill="#a8a8a8"/>
<rect x="721.3" y="386.5" width="3.9" height="40.0" fill="#ffb70a"/>
<text transform="translate(718.6 441.3) rotate(-45)" font-size="11" fill="#464a5a" text-anchor="end" textLength="54.6" lengthAdjust="spacing">14.06.2019</text>
<rect x="734.7" y="381.9" width="3.9" height="44.6" fill="#1072c8"/>
<rect x="739.7" y="363.5" width="3.9" height="63.0" fill="#ff7f1e"/>
<rect x="744.7" y="401.4" width="3.9" height="25.1" fill="#a8a8a8"/>
<rect x="749.7" y="386.3" width="3.9" height="40.2" fill="#ffb70a"/>
<text transform="translate(747.0 441.3) rotate(-45)" font-size="11" fill="#464a5a" text-anchor="end" textLength="54.6" lengthAdjust="spacing">15.06.2019</text>
<rect x="431" y="499.3" width="6.2" height="6.7" fill="#1072c8"/>
<text x="440.3" y="505.8" font-size="11.05" fill="#464a5a" textLength="202" lengthAdjust="spacing">Продажи по Торговой точке 1, тыс. руб.</text>
<rect x="431" y="521.9" width="6.2" height="6.7" fill="#ff7f1e"/>
<text x="440.3" y="528.1" font-size="11.05" fill="#464a5a" textLength="202" lengthAdjust="spacing">Продажи по Торговой точке 2, тыс. руб.</text>
<rect x="431" y="544.4" width="6.2" height="6.7" fill="#a8a8a8"/>
<text x="440.3" y="550.3" font-size="11.05" fill="#464a5a" textLength="202" lengthAdjust="spacing">Продажи по Торговой точке 3, тыс. руб.</text>
<rect x="431" y="567.0" width="6.2" height="6.7" fill="#ffb70a"/>
<text x="440.3" y="572.6" font-size="11.05" fill="#464a5a" textLength="202" lengthAdjust="spacing">Продажи по Торговой точке 4, тыс. руб.</text>
<circle cx="295.5" cy="300.5" r="4.4" fill="#fff" stroke="#939393" stroke-width="1.7"/>
<circle cx="534.5" cy="300.5" r="4.4" fill="#fff" stroke="#939393" stroke-width="1.7"/>
<circle cx="774.5" cy="300.5" r="4.4" fill="#fff" stroke="#939393" stroke-width="1.7"/>
<circle cx="295.5" cy="443.5" r="4.4" fill="#fff" stroke="#939393" stroke-width="1.7"/>
<circle cx="774.5" cy="443.5" r="4.4" fill="#fff" stroke="#939393" stroke-width="1.7"/>
<circle cx="295.5" cy="587.5" r="4.4" fill="#fff" stroke="#939393" stroke-width="1.7"/>
<circle cx="534.5" cy="587.5" r="4.4" fill="#fff" stroke="#939393" stroke-width="1.7"/>
<circle cx="774.5" cy="587.5" r="4.4" fill="#fff" stroke="#939393" stroke-width="1.7"/>
</svg>
<div class="a" style="left:788px;top:299px;width:28px;height:28px;background:#fff;border:1px solid #a9a9a9"></div>
<div class="a" style="left:788px;top:337px;width:28px;height:28px;background:#fff;border:1px solid #a9a9a9"></div>
<div class="a" style="left:788px;top:375px;width:28px;height:28px;background:#fff;border:1px solid #a9a9a9"></div>
<div class="a" style="left:282px;top:287px;width:546px;height:310px;border:3px solid #fe0000;border-radius:5px"></div>
<svg style="left:148px;top:178px" width="8" height="5"><polygon points="0,0 7.4,0 3.7,4.2" fill="#5c5c5c"/></svg>
<div class="a" style="left:176px;top:176px;width:2px;height:2px;background:#a6a6a6"></div>
<div class="a" style="left:176px;top:180px;width:2px;height:2px;background:#a6a6a6"></div>
<div class="a" style="left:176px;top:184px;width:2px;height:2px;background:#a6a6a6"></div>
<svg style="left:205px;top:176px" width="12" height="11"><path d="M1,0.8 L10.4,9.8 M10.4,0.8 L1,9.8" stroke="#b3b3b3" stroke-width="1.5" fill="none"/></svg>
<svg style="left:240px;top:176px" width="15" height="11"><path d="M1.2,5.6 L5.2,9.4 L13.2,0.8" stroke="#c4c4c4" stroke-width="1.9" fill="none"/></svg>
<div class="t" style="left:277px;top:173px;font-family:'Liberation Serif',serif;font-style:italic;font-weight:bold;font-size:14px;color:#5a5a5a;letter-spacing:-0.5px">f<span style="font-size:10.5px;position:relative;top:1.6px;left:-0.3px">x</span></div>
<svg style="left:1048px;top:177px" width="10" height="8"><path d="M1.2,1.4 L4.7,5 L8.2,1.4" stroke="#555" stroke-width="2" fill="none"/></svg>
<div class="a" style="left:1048px;top:206px;width:15px;height:15px;background:#fff;border:1px solid #ababab"></div>
<svg style="left:1052px;top:211px" width="8" height="5"><polygon points="0,4.6 8,4.6 4,0" fill="#777"/></svg>
<div class="a" style="left:1048px;top:220px;width:15px;height:410px;background:#fff;border:1px solid #ababab"></div>
<div class="a" style="left:1048px;top:630px;width:15px;height:21px;background:repeating-conic-gradient(#d3d3d3 0% 25%, #e6e6e6 0% 50%) 0 0/2px 2px"></div>
<div class="a" style="left:1048px;top:651px;width:15px;height:15px;background:#fff;border:1px solid #ababab"></div>
<svg style="left:1052px;top:656px" width="8" height="5"><polygon points="0,0 8,0 4,4.6" fill="#777"/></svg>
<div class="a" style="left:640px;top:674px;width:2px;height:2px;background:#a6a6a6"></div>
<div class="a" style="left:640px;top:678px;width:2px;height:2px;background:#a6a6a6"></div>
<div class="a" style="left:640px;top:682px;width:2px;height:2px;background:#a6a6a6"></div>
<div class="a" style="left:657px;top:672px;width:15px;height:15px;background:#fff;border:1px solid #ababab"></div>
<svg style="left:662px;top:675px" width="5" height="9"><polygon points="4.6,0 4.6,8 0,4" fill="#777"/></svg>
<div class="a" style="left:672px;top:672px;width:318px;height:15px;background:#fff;border:1px solid #ababab"></div>
<div class="a" style="left:991px;top:672px;width:39px;height:15px;background:repeating-conic-gradient(#d3d3d3 0% 25%, #e6e6e6 0% 50%) 0 0/2px 2px"></div>
<div class="a" style="left:1030px;top:672px;width:15px;height:15px;background:#fff;border:1px solid #ababab"></div>
<svg style="left:1035px;top:675px" width="5" height="9"><polygon points="0,0 0,8 4.6,4" fill="#777"/></svg>
<svg style="left:27px;top:674px" width="6" height="9"><polygon points="5,0 5,8 0.5,4" fill="#c3c3c3"/></svg>
<svg style="left:57px;top:674px" width="6" height="9"><polygon points="0.5,0 0.5,8 5,4" fill="#c3c3c3"/></svg>
<div class="a" style="left:101px;top:665px;width:108px;height:25px;background:#fff;border-bottom:2px solid #017441;border-left:1px solid #c9c9c9;border-right:1px solid #c9c9c9"></div>
<div class="t" style="left:112.5px;top:672.6px;font-size:12.4px;color:#017441;letter-spacing:0.24px;font-weight:bold;">microexcel.ru</div>
<svg style="left:240px;top:670px" width="18" height="18"><circle cx="8.8" cy="8.8" r="7.2" fill="none" stroke="#6b6b6b" stroke-width="1.2"/><path d="M8.8,4.8 V12.8 M4.8,8.8 H12.8" stroke="#6b6b6b" stroke-width="1.4"/></svg>
<div class="a" style="left:2px;top:693px;width:1064px;height:21px;background:#f3f3f3"></div>
<div class="a" style="left:2px;top:693px;width:1064px;height:1px;background:#cdcdcd"></div>
<div class="a" style="left:766px;top:694px;width:38px;height:20px;background:#c6c6c6"></div>
<div class="t" style="left:425.0px;top:698.0px;font-size:11.6px;color:#3b3b3b;letter-spacing:-0.35px;">Среднее: 8745,724573</div>
<div class="t" style="left:555.1px;top:698.0px;font-size:11.6px;color:#3b3b3b;letter-spacing:-0.12px;">Количество: 79</div>
<div class="t" style="left:650.5px;top:698.0px;font-size:11.6px;color:#3b3b3b;letter-spacing:-0.39px;">Сумма: 655929,343</div>
<div class="t" style="left:1016.9px;top:698.0px;font-size:11.6px;color:#3b3b3b;letter-spacing:-0.60px;">100 %</div>
<svg style="left:9px;top:696px" width="14" height="15" viewBox="9 696 14 15"><rect x="10.4" y="698.5" width="11.2" height="11" fill="#fff"/><path d="M10.5,704 V709.4 H21.5 V698.6 H16.2" fill="none" stroke="#3f4154" stroke-width="1"/><rect x="16.1" y="698.1" width="5.9" height="2.6" fill="#3f4154"/><path d="M15.1,703.5 H16.8 M18.1,703.5 H19.9 M12.1,705.5 H13.9 M15.1,705.5 H16.8 M18.1,705.5 H19.9 M12.1,707.5 H13.9 M15.1,707.5 H16.8 M18.1,707.5 H19.9" stroke="#3f4154" stroke-width="0.9"/><circle cx="11.9" cy="699.9" r="3.4" fill="#f3f3f3"/><circle cx="11.9" cy="699.9" r="2.7" fill="#3f4154"/></svg>
<svg style="left:777px;top:697px" width="15" height="13"><rect x="0.5" y="0.5" width="13" height="12" fill="none" stroke="#555" stroke-width="1"/><path d="M0.5,4.5 H13.5 M0.5,8.5 H13.5 M5,0.5 V12.5 M9.3,0.5 V12.5" stroke="#555" stroke-width="1"/></svg>
<svg style="left:816px;top:697px" width="15" height="13"><rect x="0.5" y="0.5" width="13" height="12" fill="none" stroke="#555" stroke-width="1"/><rect x="3.5" y="3.5" width="7" height="6" fill="none" stroke="#555" stroke-width="1"/><path d="M5,5.5 H9 M5,7.5 H9" stroke="#555" stroke-width="0.8"/></svg>
<svg style="left:853px;top:697px" width="15" height="13"><rect x="0.5" y="0.5" width="13" height="12" fill="none" stroke="#555" stroke-width="1"/><path d="M6.5,0.5 V6.5 M0.5,6.5 H13.5" fill="none" stroke="#555" stroke-width="1"/></svg>
<div class="a" style="left:885px;top:703px;width:6px;height:2px;background:#555"></div>
<div class="a" style="left:895px;top:704px;width:99px;height:1px;background:#8a8a8a"></div>
<div class="a" style="left:943px;top:698px;width:4px;height:11px;background:#5f5f5f"></div>
<div class="a" style="left:998px;top:703px;width:8px;height:2px;background:#555"></div>
<div class="a" style="left:1001px;top:700px;width:2px;height:8px;background:#555"></div>
<svg style="left:22px;top:10px" width="16" height="16"><rect x="1.8" y="1.7" width="12.4" height="12.4" fill="none" stroke="#fff" stroke-width="1.8"/><path d="M2,8.3 H14" stroke="#fff" stroke-width="1.7"/><path d="M5.4,14.6 V10.4 H11 V14.6" fill="none" stroke="#fff" stroke-width="1.6"/></svg>
<svg style="left:51px;top:10px" width="18" height="16"><path d="M6.9,1.4 L2.1,6.3 L7.1,11 M2.4,6.3 H9 C12.4,6.3 14.2,8.2 14.2,10.3 C14.2,12.4 12.6,13.8 9.4,13.8" fill="none" stroke="#fff" stroke-width="1.9" stroke-linejoin="miter"/></svg>
<svg style="left:71px;top:16px" width="6" height="4"><polygon points="0,0 5.4,0 2.7,3.2" fill="#fff"/></svg>
<svg style="left:86px;top:10px" width="18" height="16"><path d="M9.1,1.4 L13.9,6.3 L8.9,11 M13.6,6.3 H7 C3.6,6.3 1.8,8.2 1.8,10.3 C1.8,12.4 3.2,13.8 5.6,13.8" fill="none" stroke="#3fa062" stroke-width="1.9"/></svg>
<svg style="left:106px;top:16px" width="6" height="4"><polygon points="0,0 5.4,0 2.7,3.2" fill="#3a965b"/></svg>
<svg style="left:124px;top:13px" width="10" height="9"><path d="M0.6,1 H8.8" stroke="#fff" stroke-width="1.2"/><path d="M0.8,4.2 L4.7,7.8 L8.6,4.2" fill="none" stroke="#fff" stroke-width="1.2"/></svg>
<svg style="left:897px;top:10px" width="15" height="12"><rect x="0.9" y="1.2" width="12.6" height="9.3" fill="none" stroke="#fff" stroke-width="1.1"/><path d="M0.9,3.4 H13.5" stroke="#fff" stroke-width="1"/><path d="M7.2,9.2 V5 M5.2,6.8 L7.2,4.8 L9.2,6.8" fill="none" stroke="#fff" stroke-width="1"/></svg>
<div class="a" style="left:946px;top:16px;width:10px;height:1px;background:#fff"></div>
<div class="a" style="left:992px;top:11px;width:10px;height:10px;border:1px solid #fff"></div>
<svg style="left:1037px;top:11px" width="12" height="11"><path d="M0.4,0.2 L10.8,10.4 M10.8,0.2 L0.4,10.4" stroke="#fff" stroke-width="1.1"/></svg>
<svg style="left:861px;top:41px" width="13" height="17"><path d="M4.2,11.4 C4.2,9.4 1.4,8.6 1.4,5.6 C1.4,2.8 3.6,0.9 6.4,0.9 C9.2,0.9 11.4,2.8 11.4,5.6 C11.4,8.6 8.6,9.4 8.6,11.4 Z" fill="none" stroke="#fff" stroke-width="1.1"/><path d="M4.3,13.4 H8.5 M4.8,15.4 H8" stroke="#fff" stroke-width="1.1"/></svg>
<svg style="left:957px;top:41px" width="18" height="18"><circle cx="7.6" cy="5.4" r="3.9" fill="none" stroke="#fff" stroke-width="1.1"/><path d="M1,16.6 C1.4,12.4 4,10 7.4,9.6" fill="none" stroke="#fff" stroke-width="1.1"/><path d="M12.8,10.6 V16.8 M9.7,13.7 H15.9" stroke="#fff" stroke-width="1.2"/></svg>
<svg style="left:0;top:0;will-change:transform" width="1067" height="160" viewBox="0 0 1067 160" font-family="Liberation Sans, sans-serif">
<rect x="50" y="82" width="7" height="18" fill="#0e70c7"/>
<rect x="53" y="85.2" width="1" height="1" fill="#6fd08c"/>
<rect x="53" y="88.2" width="1" height="1" fill="#6fd08c"/>
<rect x="53" y="91.2" width="1" height="1" fill="#6fd08c"/>
<rect x="53" y="94.2" width="1" height="1" fill="#6fd08c"/>
<rect x="53" y="97.2" width="1" height="1" fill="#6fd08c"/>
<rect x="58" y="74" width="7" height="26" fill="#f8cc8a"/>
<path d="M66,79 H73 V89.8 H69 V93.8 H66 Z" fill="#737373"/>
<rect x="69" y="81" width="1" height="1" fill="#bdbdbd"/>
<rect x="71" y="82" width="1" height="1" fill="#bdbdbd"/>
<rect x="69" y="83" width="1" height="1" fill="#bdbdbd"/>
<rect x="67" y="85" width="1" height="1" fill="#bdbdbd"/>
<rect x="70" y="85" width="1" height="1" fill="#bdbdbd"/>
<rect x="70" y="87" width="1" height="1" fill="#bdbdbd"/>
<rect x="68" y="88" width="1" height="1" fill="#bdbdbd"/>
<path d="M70,91 H74 V95.2 H78 V98.9 H74 V103 H70 V98.9 H66 V95.2 H70 Z" fill="#4aad8c" stroke="#fff" stroke-width="0.8"/>
<rect x="129.8" y="71.8" width="30.6" height="30.6" fill="#fff" stroke="#a3a3a3" stroke-width="1.1"/>
<rect x="135.2" y="75.3" width="15.8" height="1.6" fill="#9a9a9a"/>
<rect x="134.5" y="79.6" width="18" height="16" fill="#fff" stroke="#8a8a8a" stroke-width="0.9"/>
<path d="M134.5,83.5 H152.5 M134.5,87.5 H152.5 M134.5,91.5 H152.5" stroke="#b5b5b5" stroke-width="0.7"/>
<rect x="136.5" y="86.6" width="2.6999999999999886" height="8.800000000000011" fill="#fff" stroke="#6f6f6f" stroke-width="0.9"/>
<rect x="139.6" y="82.5" width="3.0" height="12.900000000000006" fill="#dcdcdc" stroke="#6f6f6f" stroke-width="0.9"/>
<rect x="144.4" y="85.5" width="3.1999999999999886" height="9.900000000000006" fill="#fff" stroke="#6f6f6f" stroke-width="0.9"/>
<rect x="147.9" y="89.4" width="2.9000000000000057" height="6.0" fill="#dcdcdc" stroke="#6f6f6f" stroke-width="0.9"/>
<path d="M134,95.6 H153" stroke="#6f6f6f" stroke-width="1"/>
<rect x="131" y="82.1" width="2" height="0.9" fill="#9a9a9a"/>
<rect x="131" y="86.1" width="2" height="0.9" fill="#9a9a9a"/>
<rect x="131" y="90.1" width="2" height="0.9" fill="#9a9a9a"/>
<rect x="131" y="94.1" width="2" height="0.9" fill="#9a9a9a"/>
<rect x="154.6" y="81.6" width="4" height="8" fill="#fff" stroke="#6f6f6f" stroke-width="0.9"/>
<rect x="156.1" y="83.4" width="1" height="1" fill="#6f6f6f"/>
<rect x="156.1" y="85.4" width="1" height="1" fill="#6f6f6f"/>
<rect x="156.1" y="87.4" width="1" height="1" fill="#6f6f6f"/>
<rect x="137" y="98" width="4" height="1" fill="#a8a8a8"/><rect x="146" y="98" width="4" height="1" fill="#a8a8a8"/>
<circle cx="214.9" cy="77.9" r="4.1" fill="#f8cc8a"/>
<circle cx="227" cy="77.9" r="4.1" fill="#4aad8c"/>
<circle cx="211" cy="88.9" r="4.1" fill="#ee4a28"/>
<circle cx="230.9" cy="88.9" r="4.1" fill="#0e70c7"/>
<circle cx="221" cy="96" r="4.1" fill="#ff7f1e"/>
<rect x="213.5" y="76" width="1" height="1" fill="#ff8f3a"/>
<rect x="215.5" y="76" width="1" height="1" fill="#ff8f3a"/>
<rect x="217" y="76" width="1" height="1" fill="#ff8f3a"/>
<rect x="213.5" y="78" width="1" height="1" fill="#ff8f3a"/>
<rect x="216" y="77.5" width="1" height="1" fill="#ff8f3a"/>
<rect x="216.5" y="79" width="1" height="1" fill="#ff8f3a"/>
<rect x="214.5" y="80" width="1" height="1" fill="#ff8f3a"/>
<rect x="209.5" y="87" width="1" height="1" fill="#ff9a2e"/>
<rect x="211.5" y="87.5" width="1" height="1" fill="#ff9a2e"/>
<rect x="213" y="89" width="1" height="1" fill="#ff9a2e"/>
<rect x="210" y="90" width="1" height="1" fill="#ff9a2e"/>
<rect x="212" y="91" width="1" height="1" fill="#ff9a2e"/>
<rect x="252.5" y="71.5" width="442" height="59" fill="#fff" stroke="#d2d2d2" stroke-width="1"/>
<rect x="253" y="73" width="88" height="55.6" fill="#c6c6c6"/>
<rect x="257" y="77" width="80" height="48" fill="#fff"/>
<text x="297" y="82.3" font-size="3.1" fill="#555" text-anchor="middle" textLength="28" lengthAdjust="spacingAndGlyphs">Название диаграммы</text>
<text x="262.6" y="86.2" font-size="1.9" fill="#777" text-anchor="end">50</text>
<text x="262.6" y="88.55" font-size="1.9" fill="#777" text-anchor="end">40</text>
<text x="262.6" y="90.9" font-size="1.9" fill="#777" text-anchor="end">30</text>
<text x="262.6" y="93.25" font-size="1.9" fill="#777" text-anchor="end">20</text>
<text x="262.6" y="95.60000000000001" font-size="1.9" fill="#777" text-anchor="end">10</text>
<text x="262.6" y="97.95" font-size="1.9" fill="#777" text-anchor="end">0</text>
<path d="M264,85.5 H334" stroke="#e3e3e3" stroke-width="0.4" stroke-dasharray="0.6 0.8"/>
<rect x="264.20" y="91.24" width="0.9" height="6.56" fill="#4cc3d9"/>
<rect x="265.10" y="89.49" width="1.1" height="8.31" fill="#f9c880"/>
<rect x="266.20" y="94.38" width="0.8" height="3.42" fill="#cfcfd6"/>
<rect x="266.90" y="91.72" width="1.1" height="6.08" fill="#f9c880"/>
<text transform="translate(267.80 99.4) rotate(-45)" font-size="2.05" font-weight="bold" fill="#4a4a4a" text-anchor="end">01.06.2019</text>
<rect x="268.87" y="91.18" width="0.9" height="6.62" fill="#4cc3d9"/>
<rect x="269.77" y="89.37" width="1.1" height="8.43" fill="#f9c880"/>
<rect x="270.87" y="94.35" width="0.8" height="3.45" fill="#cfcfd6"/>
<rect x="271.57" y="91.69" width="1.1" height="6.11" fill="#f9c880"/>
<text transform="translate(272.47 99.4) rotate(-45)" font-size="2.05" font-weight="bold" fill="#4a4a4a" text-anchor="end">02.06.2019</text>
<rect x="273.54" y="91.11" width="0.9" height="6.69" fill="#4cc3d9"/>
<rect x="274.44" y="89.24" width="1.1" height="8.56" fill="#f9c880"/>
<rect x="275.54" y="94.32" width="0.8" height="3.48" fill="#cfcfd6"/>
<rect x="276.24" y="91.66" width="1.1" height="6.14" fill="#f9c880"/>
<text transform="translate(277.14 99.4) rotate(-45)" font-size="2.05" font-weight="bold" fill="#4a4a4a" text-anchor="end">03.06.2019</text>
<rect x="278.21" y="91.04" width="0.9" height="6.76" fill="#4cc3d9"/>
<rect x="279.11" y="89.11" width="1.1" height="8.69" fill="#f9c880"/>
<rect x="280.21" y="94.30" width="0.8" height="3.50" fill="#cfcfd6"/>
<rect x="280.91" y="91.62" width="1.1" height="6.18" fill="#f9c880"/>
<text transform="translate(281.81 99.4) rotate(-45)" font-size="2.05" font-weight="bold" fill="#4a4a4a" text-anchor="end">04.06.2019</text>
<rect x="282.88" y="90.98" width="0.9" height="6.82" fill="#4cc3d9"/>
<rect x="283.78" y="88.98" width="1.1" height="8.82" fill="#f9c880"/>
<rect x="284.88" y="94.27" width="0.8" height="3.53" fill="#cfcfd6"/>
<rect x="285.58" y="91.59" width="1.1" height="6.21" fill="#f9c880"/>
<text transform="translate(286.48 99.4) rotate(-45)" font-size="2.05" font-weight="bold" fill="#4a4a4a" text-anchor="end">05.06.2019</text>
<rect x="287.55" y="90.91" width="0.9" height="6.89" fill="#4cc3d9"/>
<rect x="288.45" y="88.85" width="1.1" height="8.95" fill="#f9c880"/>
<rect x="289.55" y="94.24" width="0.8" height="3.56" fill="#cfcfd6"/>
<rect x="290.25" y="91.56" width="1.1" height="6.24" fill="#f9c880"/>
<text transform="translate(291.15 99.4) rotate(-45)" font-size="2.05" font-weight="bold" fill="#4a4a4a" text-anchor="end">06.06.2019</text>
<rect x="292.22" y="90.84" width="0.9" height="6.96" fill="#4cc3d9"/>
<rect x="293.12" y="88.72" width="1.1" height="9.08" fill="#f9c880"/>
<rect x="294.22" y="94.21" width="0.8" height="3.59" fill="#cfcfd6"/>
<rect x="294.92" y="91.53" width="1.1" height="6.27" fill="#f9c880"/>
<text transform="translate(295.82 99.4) rotate(-45)" font-size="2.05" font-weight="bold" fill="#4a4a4a" text-anchor="end">07.06.2019</text>
<rect x="296.89" y="90.77" width="0.9" height="7.03" fill="#4cc3d9"/>
<rect x="297.79" y="88.58" width="1.1" height="9.22" fill="#f9c880"/>
<rect x="298.89" y="94.18" width="0.8" height="3.62" fill="#cfcfd6"/>
<rect x="299.59" y="91.50" width="1.1" height="6.30" fill="#f9c880"/>
<text transform="translate(300.49 99.4) rotate(-45)" font-size="2.05" font-weight="bold" fill="#4a4a4a" text-anchor="end">08.06.2019</text>
<rect x="301.56" y="90.70" width="0.9" height="7.10" fill="#4cc3d9"/>
<rect x="302.46" y="88.44" width="1.1" height="9.36" fill="#f9c880"/>
<rect x="303.56" y="94.15" width="0.8" height="3.65" fill="#cfcfd6"/>
<rect x="304.26" y="91.47" width="1.1" height="6.33" fill="#f9c880"/>
<text transform="translate(305.16 99.4) rotate(-45)" font-size="2.05" font-weight="bold" fill="#4a4a4a" text-anchor="end">09.06.2019</text>
<rect x="306.23" y="90.63" width="0.9" height="7.17" fill="#4cc3d9"/>
<rect x="307.13" y="88.30" width="1.1" height="9.50" fill="#f9c880"/>
<rect x="308.23" y="94.12" width="0.8" height="3.68" fill="#cfcfd6"/>
<rect x="308.93" y="91.44" width="1.1" height="6.36" fill="#f9c880"/>
<text transform="translate(309.83 99.4) rotate(-45)" font-size="2.05" font-weight="bold" fill="#4a4a4a" text-anchor="end">10.06.2019</text>
<rect x="310.90" y="90.56" width="0.9" height="7.24" fill="#4cc3d9"/>
<rect x="311.80" y="88.16" width="1.1" height="9.64" fill="#f9c880"/>
<rect x="312.90" y="94.10" width="0.8" height="3.70" fill="#cfcfd6"/>
<rect x="313.60" y="91.41" width="1.1" height="6.39" fill="#f9c880"/>
<text transform="translate(314.50 99.4) rotate(-45)" font-size="2.05" font-weight="bold" fill="#4a4a4a" text-anchor="end">11.06.2019</text>
<rect x="315.57" y="90.48" width="0.9" height="7.32" fill="#4cc3d9"/>
<rect x="316.47" y="88.02" width="1.1" height="9.78" fill="#f9c880"/>
<rect x="317.57" y="94.07" width="0.8" height="3.73" fill="#cfcfd6"/>
<rect x="318.27" y="91.37" width="1.1" height="6.43" fill="#f9c880"/>
<text transform="translate(319.17 99.4) rotate(-45)" font-size="2.05" font-weight="bold" fill="#4a4a4a" text-anchor="end">12.06.2019</text>
<rect x="320.24" y="90.41" width="0.9" height="7.39" fill="#4cc3d9"/>
<rect x="321.14" y="87.87" width="1.1" height="9.93" fill="#f9c880"/>
<rect x="322.24" y="94.04" width="0.8" height="3.76" fill="#cfcfd6"/>
<rect x="322.94" y="91.34" width="1.1" height="6.46" fill="#f9c880"/>
<text transform="translate(323.84 99.4) rotate(-45)" font-size="2.05" font-weight="bold" fill="#4a4a4a" text-anchor="end">13.06.2019</text>
<rect x="324.91" y="90.34" width="0.9" height="7.46" fill="#4cc3d9"/>
<rect x="325.81" y="87.72" width="1.1" height="10.08" fill="#f9c880"/>
<rect x="326.91" y="94.01" width="0.8" height="3.79" fill="#cfcfd6"/>
<rect x="327.61" y="91.31" width="1.1" height="6.49" fill="#f9c880"/>
<text transform="translate(328.51 99.4) rotate(-45)" font-size="2.05" font-weight="bold" fill="#4a4a4a" text-anchor="end">14.06.2019</text>
<rect x="329.58" y="90.26" width="0.9" height="7.54" fill="#4cc3d9"/>
<rect x="330.48" y="87.57" width="1.1" height="10.23" fill="#f9c880"/>
<rect x="331.58" y="93.98" width="0.8" height="3.82" fill="#cfcfd6"/>
<rect x="332.28" y="91.28" width="1.1" height="6.52" fill="#f9c880"/>
<text transform="translate(333.18 99.4) rotate(-45)" font-size="2.05" font-weight="bold" fill="#4a4a4a" text-anchor="end">15.06.2019</text>
<rect x="279.4" y="109.9" width="1.3" height="1.3" fill="#4cc3d9"/>
<text x="281.3" y="111.2" font-size="1.9" font-weight="bold" fill="#555" textLength="33.6" lengthAdjust="spacingAndGlyphs">Продажи по Торговой точке 1, тыс. руб.</text>
<rect x="279.4" y="113.82000000000001" width="1.3" height="1.3" fill="#f9b65a"/>
<text x="281.3" y="115.12" font-size="1.9" font-weight="bold" fill="#555" textLength="33.6" lengthAdjust="spacingAndGlyphs">Продажи по Торговой точке 2, тыс. руб.</text>
<rect x="279.4" y="117.74000000000001" width="1.3" height="1.3" fill="#d8d8d8"/>
<text x="281.3" y="119.04" font-size="1.9" font-weight="bold" fill="#555" textLength="33.6" lengthAdjust="spacingAndGlyphs">Продажи по Торговой точке 3, тыс. руб.</text>
<rect x="279.4" y="121.66000000000001" width="1.3" height="1.3" fill="#f9c880"/>
<text x="281.3" y="122.96000000000001" font-size="1.9" font-weight="bold" fill="#555" textLength="33.6" lengthAdjust="spacingAndGlyphs">Продажи по Торговой точке 4, тыс. руб.</text>
<text x="649.6" y="82.3" font-size="3.1" fill="#555" text-anchor="middle" textLength="28" lengthAdjust="spacingAndGlyphs">Название диаграммы</text>
<text x="615.2" y="86.2" font-size="1.9" fill="#777" text-anchor="end">50</text>
<text x="615.2" y="88.55" font-size="1.9" fill="#777" text-anchor="end">40</text>
<text x="615.2" y="90.9" font-size="1.9" fill="#777" text-anchor="end">30</text>
<text x="615.2" y="93.25" font-size="1.9" fill="#777" text-anchor="end">20</text>
<text x="615.2" y="95.60000000000001" font-size="1.9" fill="#777" text-anchor="end">10</text>
<text x="615.2" y="97.95" font-size="1.9" fill="#777" text-anchor="end">0</text>
<path d="M616.6,85.5 H686.6" stroke="#e3e3e3" stroke-width="0.4" stroke-dasharray="0.6 0.8"/>
<rect x="616.80" y="91.24" width="0.9" height="6.56" fill="#4cc3d9"/>
<rect x="617.70" y="89.49" width="1.1" height="8.31" fill="#f9c880"/>
<rect x="618.80" y="94.38" width="0.8" height="3.42" fill="#cfcfd6"/>
<rect x="619.50" y="91.72" width="1.1" height="6.08" fill="#f9c880"/>
<text transform="translate(620.40 99.4) rotate(-45)" font-size="2.05" font-weight="bold" fill="#4a4a4a" text-anchor="end">01.06.2019</text>
<rect x="621.47" y="91.18" width="0.9" height="6.62" fill="#4cc3d9"/>
<rect x="622.37" y="89.37" width="1.1" height="8.43" fill="#f9c880"/>
<rect x="623.47" y="94.35" width="0.8" height="3.45" fill="#cfcfd6"/>
<rect x="624.17" y="91.69" width="1.1" height="6.11" fill="#f9c880"/>
<text transform="translate(625.07 99.4) rotate(-45)" font-size="2.05" font-weight="bold" fill="#4a4a4a" text-anchor="end">02.06.2019</text>
<rect x="626.14" y="91.11" width="0.9" height="6.69" fill="#4cc3d9"/>
<rect x="627.04" y="89.24" width="1.1" height="8.56" fill="#f9c880"/>
<rect x="628.14" y="94.32" width="0.8" height="3.48" fill="#cfcfd6"/>
<rect x="628.84" y="91.66" width="1.1" height="6.14" fill="#f9c880"/>
<text transform="translate(629.74 99.4) rotate(-45)" font-size="2.05" font-weight="bold" fill="#4a4a4a" text-anchor="end">03.06.2019</text>
<rect x="630.81" y="91.04" width="0.9" height="6.76" fill="#4cc3d9"/>
<rect x="631.71" y="89.11" width="1.1" height="8.69" fill="#f9c880"/>
<rect x="632.81" y="94.30" width="0.8" height="3.50" fill="#cfcfd6"/>
<rect x="633.51" y="91.62" width="1.1" height="6.18" fill="#f9c880"/>
<text transform="translate(634.41 99.4) rotate(-45)" font-size="2.05" font-weight="bold" fill="#4a4a4a" text-anchor="end">04.06.2019</text>
<rect x="635.48" y="90.98" width="0.9" height="6.82" fill="#4cc3d9"/>
<rect x="636.38" y="88.98" width="1.1" height="8.82" fill="#f9c880"/>
<rect x="637.48" y="94.27" width="0.8" height="3.53" fill="#cfcfd6"/>
<rect x="638.18" y="91.59" width="1.1" height="6.21" fill="#f9c880"/>
<text transform="translate(639.08 99.4) rotate(-45)" font-size="2.05" font-weight="bold" fill="#4a4a4a" text-anchor="end">05.06.2019</text>
<rect x="640.15" y="90.91" width="0.9" height="6.89" fill="#4cc3d9"/>
<rect x="641.05" y="88.85" width="1.1" height="8.95" fill="#f9c880"/>
<rect x="642.15" y="94.24" width="0.8" height="3.56" fill="#cfcfd6"/>
<rect x="642.85" y="91.56" width="1.1" height="6.24" fill="#f9c880"/>
<text transform="translate(643.75 99.4) rotate(-45)" font-size="2.05" font-weight="bold" fill="#4a4a4a" text-anchor="end">06.06.2019</text>
<rect x="644.82" y="90.84" width="0.9" height="6.96" fill="#4cc3d9"/>
<rect x="645.72" y="88.72" width="1.1" height="9.08" fill="#f9c880"/>
<rect x="646.82" y="94.21" width="0.8" height="3.59" fill="#cfcfd6"/>
<rect x="647.52" y="91.53" width="1.1" height="6.27" fill="#f9c880"/>
<text transform="translate(648.42 99.4) rotate(-45)" font-size="2.05" font-weight="bold" fill="#4a4a4a" text-anchor="end">07.06.2019</text>
<rect x="649.49" y="90.77" width="0.9" height="7.03" fill="#4cc3d9"/>
<rect x="650.39" y="88.58" width="1.1" height="9.22" fill="#f9c880"/>
<rect x="651.49" y="94.18" width="0.8" height="3.62" fill="#cfcfd6"/>
<rect x="652.19" y="91.50" width="1.1" height="6.30" fill="#f9c880"/>
<text transform="translate(653.09 99.4) rotate(-45)" font-size="2.05" font-weight="bold" fill="#4a4a4a" text-anchor="end">08.06.2019</text>
<rect x="654.16" y="90.70" width="0.9" height="7.10" fill="#4cc3d9"/>
<rect x="655.06" y="88.44" width="1.1" height="9.36" fill="#f9c880"/>
<rect x="656.16" y="94.15" width="0.8" height="3.65" fill="#cfcfd6"/>
<rect x="656.86" y="91.47" width="1.1" height="6.33" fill="#f9c880"/>
<text transform="translate(657.76 99.4) rotate(-45)" font-size="2.05" font-weight="bold" fill="#4a4a4a" text-anchor="end">09.06.2019</text>
<rect x="658.83" y="90.63" width="0.9" height="7.17" fill="#4cc3d9"/>
<rect x="659.73" y="88.30" width="1.1" height="9.50" fill="#f9c880"/>
<rect x="660.83" y="94.12" width="0.8" height="3.68" fill="#cfcfd6"/>
<rect x="661.53" y="91.44" width="1.1" height="6.36" fill="#f9c880"/>
<text transform="translate(662.43 99.4) rotate(-45)" font-size="2.05" font-weight="bold" fill="#4a4a4a" text-anchor="end">10.06.2019</text>
<rect x="663.50" y="90.56" width="0.9" height="7.24" fill="#4cc3d9"/>
<rect x="664.40" y="88.16" width="1.1" height="9.64" fill="#f9c880"/>
<rect x="665.50" y="94.10" width="0.8" height="3.70" fill="#cfcfd6"/>
<rect x="666.20" y="91.41" width="1.1" height="6.39" fill="#f9c880"/>
<text transform="translate(667.10 99.4) rotate(-45)" font-size="2.05" font-weight="bold" fill="#4a4a4a" text-anchor="end">11.06.2019</text>
<rect x="668.17" y="90.48" width="0.9" height="7.32" fill="#4cc3d9"/>
<rect x="669.07" y="88.02" width="1.1" height="9.78" fill="#f9c880"/>
<rect x="670.17" y="94.07" width="0.8" height="3.73" fill="#cfcfd6"/>
<rect x="670.87" y="91.37" width="1.1" height="6.43" fill="#f9c880"/>
<text transform="translate(671.77 99.4) rotate(-45)" font-size="2.05" font-weight="bold" fill="#4a4a4a" text-anchor="end">12.06.2019</text>
<rect x="672.84" y="90.41" width="0.9" height="7.39" fill="#4cc3d9"/>
<rect x="673.74" y="87.87" width="1.1" height="9.93" fill="#f9c880"/>
<rect x="674.84" y="94.04" width="0.8" height="3.76" fill="#cfcfd6"/>
<rect x="675.54" y="91.34" width="1.1" height="6.46" fill="#f9c880"/>
<text transform="translate(676.44 99.4) rotate(-45)" font-size="2.05" font-weight="bold" fill="#4a4a4a" text-anchor="end">13.06.2019</text>
<rect x="677.51" y="90.34" width="0.9" height="7.46" fill="#4cc3d9"/>
<rect x="678.41" y="87.72" width="1.1" height="10.08" fill="#f9c880"/>
<rect x="679.51" y="94.01" width="0.8" height="3.79" fill="#cfcfd6"/>
<rect x="680.21" y="91.31" width="1.1" height="6.49" fill="#f9c880"/>
<text transform="translate(681.11 99.4) rotate(-45)" font-size="2.05" font-weight="bold" fill="#4a4a4a" text-anchor="end">14.06.2019</text>
<rect x="682.18" y="90.26" width="0.9" height="7.54" fill="#4cc3d9"/>
<rect x="683.08" y="87.57" width="1.1" height="10.23" fill="#f9c880"/>
<rect x="684.18" y="93.98" width="0.8" height="3.82" fill="#cfcfd6"/>
<rect x="684.88" y="91.28" width="1.1" height="6.52" fill="#f9c880"/>
<text transform="translate(685.78 99.4) rotate(-45)" font-size="2.05" font-weight="bold" fill="#4a4a4a" text-anchor="end">15.06.2019</text>
<rect x="632.0" y="109.9" width="1.3" height="1.3" fill="#4cc3d9"/>
<text x="633.9" y="111.2" font-size="1.9" font-weight="bold" fill="#555" textLength="33.6" lengthAdjust="spacingAndGlyphs">Продажи по Торговой точке 1, тыс. руб.</text>
<rect x="632.0" y="113.82000000000001" width="1.3" height="1.3" fill="#f9b65a"/>
<text x="633.9" y="115.12" font-size="1.9" font-weight="bold" fill="#555" textLength="33.6" lengthAdjust="spacingAndGlyphs">Продажи по Торговой точке 2, тыс. руб.</text>
<rect x="632.0" y="117.74000000000001" width="1.3" height="1.3" fill="#d8d8d8"/>
<text x="633.9" y="119.04" font-size="1.9" font-weight="bold" fill="#555" textLength="33.6" lengthAdjust="spacingAndGlyphs">Продажи по Торговой точке 3, тыс. руб.</text>
<rect x="632.0" y="121.66000000000001" width="1.3" height="1.3" fill="#f9c880"/>
<text x="633.9" y="122.96000000000001" font-size="1.9" font-weight="bold" fill="#555" textLength="33.6" lengthAdjust="spacingAndGlyphs">Продажи по Торговой точке 4, тыс. руб.</text>
<text x="385" y="82" font-size="3.3" font-weight="bold" fill="#555" text-anchor="middle" textLength="44" lengthAdjust="spacingAndGlyphs">НАЗВАНИЕ ДИАГРАММЫ</text>
<rect x="367.6" y="86.1" width="1.2" height="1.2" fill="#2e7fd0"/>
<text x="369.3" y="87.3" font-size="1.9" font-weight="bold" fill="#555" textLength="33.4" lengthAdjust="spacingAndGlyphs">Продажи по Торговой точке 1, тыс. руб.</text>
<rect x="367.6" y="89.64999999999999" width="1.2" height="1.2" fill="#f9c880"/>
<text x="369.3" y="90.85" font-size="1.9" font-weight="bold" fill="#555" textLength="33.4" lengthAdjust="spacingAndGlyphs">Продажи по Торговой точке 2, тыс. руб.</text>
<rect x="367.6" y="93.19999999999999" width="1.2" height="1.2" fill="#d8d8d8"/>
<text x="369.3" y="94.39999999999999" font-size="1.9" font-weight="bold" fill="#555" textLength="33.4" lengthAdjust="spacingAndGlyphs">Продажи по Торговой точке 3, тыс. руб.</text>
<rect x="367.6" y="96.74999999999999" width="1.2" height="1.2" fill="#f9c880"/>
<text x="369.3" y="97.94999999999999" font-size="1.9" font-weight="bold" fill="#555" textLength="33.4" lengthAdjust="spacingAndGlyphs">Продажи по Торговой точке 4, тыс. руб.</text>
<rect x="353.60" y="100.20" width="2.7" height="6.60" fill="#cfcfcf"/>
<rect x="354.40" y="98.80" width="1.1" height="5.20" fill="#a2a2a8"/>
<rect x="353.50" y="106.8" width="2.9" height="6.1" fill="#f9cc8a"/>
<rect x="353.20" y="107.5" width="0.9" height="5.4" fill="#4cc3d9"/>
<text transform="translate(356.40 114.4) rotate(-40)" font-size="2.0" fill="#9a9a9a" text-anchor="end">01.06.2019</text>
<rect x="358.22" y="100.15" width="2.7" height="6.60" fill="#cfcfcf"/>
<rect x="359.02" y="98.75" width="1.1" height="5.20" fill="#a2a2a8"/>
<rect x="358.12" y="106.8" width="2.9" height="6.1" fill="#f9cc8a"/>
<text transform="translate(361.02 114.4) rotate(-40)" font-size="2.0" fill="#9a9a9a" text-anchor="end">02.06.2019</text>
<rect x="362.84" y="100.10" width="2.7" height="6.60" fill="#cfcfcf"/>
<rect x="363.64" y="98.70" width="1.1" height="5.20" fill="#a2a2a8"/>
<rect x="362.74" y="106.8" width="2.9" height="6.1" fill="#f9cc8a"/>
<text transform="translate(365.64 114.4) rotate(-40)" font-size="2.0" fill="#9a9a9a" text-anchor="end">03.06.2019</text>
<rect x="367.46" y="100.05" width="2.7" height="6.60" fill="#cfcfcf"/>
<rect x="368.26" y="98.65" width="1.1" height="5.20" fill="#a2a2a8"/>
<rect x="367.36" y="106.8" width="2.9" height="6.1" fill="#f9cc8a"/>
<text transform="translate(370.26 114.4) rotate(-40)" font-size="2.0" fill="#9a9a9a" text-anchor="end">04.06.2019</text>
<rect x="372.08" y="100.00" width="2.7" height="6.60" fill="#cfcfcf"/>
<rect x="372.88" y="98.60" width="1.1" height="5.20" fill="#a2a2a8"/>
<rect x="371.98" y="106.8" width="2.9" height="6.1" fill="#f9cc8a"/>
<text transform="translate(374.88 114.4) rotate(-40)" font-size="2.0" fill="#9a9a9a" text-anchor="end">05.06.2019</text>
<rect x="376.70" y="99.95" width="2.7" height="6.60" fill="#cfcfcf"/>
<rect x="377.50" y="98.55" width="1.1" height="5.20" fill="#a2a2a8"/>
<rect x="376.60" y="106.8" width="2.9" height="6.1" fill="#f9cc8a"/>
<text transform="translate(379.50 114.4) rotate(-40)" font-size="2.0" fill="#9a9a9a" text-anchor="end">06.06.2019</text>
<rect x="381.32" y="99.90" width="2.7" height="6.60" fill="#cfcfcf"/>
<rect x="382.12" y="98.50" width="1.1" height="5.20" fill="#a2a2a8"/>
<rect x="381.22" y="106.8" width="2.9" height="6.1" fill="#f9cc8a"/>
<text transform="translate(384.12 114.4) rotate(-40)" font-size="2.0" fill="#9a9a9a" text-anchor="end">07.06.2019</text>
<rect x="385.94" y="99.85" width="2.7" height="6.60" fill="#cfcfcf"/>
<rect x="386.74" y="98.45" width="1.1" height="5.20" fill="#a2a2a8"/>
<rect x="385.84" y="106.8" width="2.9" height="6.1" fill="#f9cc8a"/>
<text transform="translate(388.74 114.4) rotate(-40)" font-size="2.0" fill="#9a9a9a" text-anchor="end">08.06.2019</text>
<rect x="390.56" y="99.80" width="2.7" height="6.60" fill="#cfcfcf"/>
<rect x="391.36" y="98.40" width="1.1" height="5.20" fill="#a2a2a8"/>
<rect x="390.46" y="106.8" width="2.9" height="6.1" fill="#f9cc8a"/>
<text transform="translate(393.36 114.4) rotate(-40)" font-size="2.0" fill="#9a9a9a" text-anchor="end">09.06.2019</text>
<rect x="395.18" y="99.75" width="2.7" height="6.60" fill="#cfcfcf"/>
<rect x="395.98" y="98.35" width="1.1" height="5.20" fill="#a2a2a8"/>
<rect x="395.08" y="106.8" width="2.9" height="6.1" fill="#f9cc8a"/>
<text transform="translate(397.98 114.4) rotate(-40)" font-size="2.0" fill="#9a9a9a" text-anchor="end">10.06.2019</text>
<rect x="399.80" y="99.70" width="2.7" height="6.60" fill="#cfcfcf"/>
<rect x="400.60" y="98.30" width="1.1" height="5.20" fill="#a2a2a8"/>
<rect x="399.70" y="106.8" width="2.9" height="6.1" fill="#f9cc8a"/>
<text transform="translate(402.60 114.4) rotate(-40)" font-size="2.0" fill="#9a9a9a" text-anchor="end">11.06.2019</text>
<rect x="404.42" y="99.65" width="2.7" height="6.60" fill="#cfcfcf"/>
<rect x="405.22" y="98.25" width="1.1" height="5.20" fill="#a2a2a8"/>
<rect x="404.32" y="106.8" width="2.9" height="6.1" fill="#f9cc8a"/>
<text transform="translate(407.22 114.4) rotate(-40)" font-size="2.0" fill="#9a9a9a" text-anchor="end">12.06.2019</text>
<rect x="409.04" y="99.60" width="2.7" height="6.60" fill="#cfcfcf"/>
<rect x="409.84" y="98.20" width="1.1" height="5.20" fill="#a2a2a8"/>
<rect x="408.94" y="106.8" width="2.9" height="6.1" fill="#f9cc8a"/>
<text transform="translate(411.84 114.4) rotate(-40)" font-size="2.0" fill="#9a9a9a" text-anchor="end">13.06.2019</text>
<rect x="413.66" y="99.55" width="2.7" height="6.60" fill="#cfcfcf"/>
<rect x="414.46" y="98.15" width="1.1" height="5.20" fill="#a2a2a8"/>
<rect x="413.56" y="106.8" width="2.9" height="6.1" fill="#f9cc8a"/>
<text transform="translate(416.46 114.4) rotate(-40)" font-size="2.0" fill="#9a9a9a" text-anchor="end">14.06.2019</text>
<rect x="418.28" y="99.50" width="2.7" height="6.60" fill="#cfcfcf"/>
<rect x="419.08" y="98.10" width="1.1" height="5.20" fill="#a2a2a8"/>
<rect x="418.18" y="106.8" width="2.9" height="6.1" fill="#f9cc8a"/>
<text transform="translate(421.08 114.4) rotate(-40)" font-size="2.0" fill="#9a9a9a" text-anchor="end">15.06.2019</text>
<text x="473" y="82.8" font-size="3.3" font-weight="bold" fill="#808080" text-anchor="middle" textLength="49" lengthAdjust="spacingAndGlyphs">НАЗВАНИЕ ДИАГРАММЫ</text>
<rect x="455.4" y="86.89999999999999" width="1.2" height="1.2" fill="#4cc3d9"/>
<text x="457" y="88.1" font-size="1.9" font-weight="bold" fill="#555" textLength="33.4" lengthAdjust="spacingAndGlyphs">Продажи по Торговой точке 1, тыс. руб.</text>
<rect x="455.4" y="90.49999999999999" width="1.2" height="1.2" fill="#f9a640"/>
<text x="457" y="91.69999999999999" font-size="1.9" font-weight="bold" fill="#555" textLength="33.4" lengthAdjust="spacingAndGlyphs">Продажи по Торговой точке 2, тыс. руб.</text>
<rect x="455.4" y="94.1" width="1.2" height="1.2" fill="#d8d8d8"/>
<text x="457" y="95.3" font-size="1.9" font-weight="bold" fill="#555" textLength="33.4" lengthAdjust="spacingAndGlyphs">Продажи по Торговой точке 3, тыс. руб.</text>
<rect x="455.4" y="97.69999999999999" width="1.2" height="1.2" fill="#f9c880"/>
<text x="457" y="98.89999999999999" font-size="1.9" font-weight="bold" fill="#555" textLength="33.4" lengthAdjust="spacingAndGlyphs">Продажи по Торговой точке 4, тыс. руб.</text>
<text x="437.6" y="103.6" font-size="1.8" fill="#777" text-anchor="end">50</text>
<text x="437.6" y="105.69999999999999" font-size="1.8" fill="#777" text-anchor="end">40</text>
<text x="437.6" y="107.8" font-size="1.8" fill="#777" text-anchor="end">30</text>
<text x="437.6" y="109.89999999999999" font-size="1.8" fill="#777" text-anchor="end">20</text>
<text x="437.6" y="112.0" font-size="1.8" fill="#777" text-anchor="end">10</text>
<text x="437.6" y="114.1" font-size="1.8" fill="#777" text-anchor="end">0</text>
<rect x="440.60" y="108.20" width="1" height="6.00" fill="#4ea2dc"/>
<rect x="441.60" y="105.40" width="1.1" height="9.00" fill="#f9c070"/>
<rect x="442.70" y="110.80" width="0.9" height="3.40" fill="#e5e5ea"/>
<rect x="443.50" y="108.30" width="1.1" height="6.00" fill="#f9c880"/>
<text transform="translate(444.20 115.8) rotate(-45)" font-size="2.0" fill="#555" text-anchor="end">01.06.2019</text>
<rect x="445.27" y="108.20" width="1" height="6.00" fill="#4ea2dc"/>
<rect x="446.27" y="105.34" width="1.1" height="9.06" fill="#f9c070"/>
<rect x="447.37" y="110.80" width="0.9" height="3.40" fill="#e5e5ea"/>
<rect x="448.17" y="108.30" width="1.1" height="6.00" fill="#f9c880"/>
<text transform="translate(448.87 115.8) rotate(-45)" font-size="2.0" fill="#555" text-anchor="end">02.06.2019</text>
<rect x="449.94" y="108.20" width="1" height="6.00" fill="#4ea2dc"/>
<rect x="450.94" y="105.28" width="1.1" height="9.12" fill="#f9c070"/>
<rect x="452.04" y="110.80" width="0.9" height="3.40" fill="#e5e5ea"/>
<rect x="452.84" y="108.30" width="1.1" height="6.00" fill="#f9c880"/>
<text transform="translate(453.54 115.8) rotate(-45)" font-size="2.0" fill="#555" text-anchor="end">03.06.2019</text>
<rect x="454.61" y="108.20" width="1" height="6.00" fill="#4ea2dc"/>
<rect x="455.61" y="105.22" width="1.1" height="9.18" fill="#f9c070"/>
<rect x="456.71" y="110.80" width="0.9" height="3.40" fill="#e5e5ea"/>
<rect x="457.51" y="108.30" width="1.1" height="6.00" fill="#f9c880"/>
<text transform="translate(458.21 115.8) rotate(-45)" font-size="2.0" fill="#555" text-anchor="end">04.06.2019</text>
<rect x="459.28" y="108.20" width="1" height="6.00" fill="#4ea2dc"/>
<rect x="460.28" y="105.16" width="1.1" height="9.24" fill="#f9c070"/>
<rect x="461.38" y="110.80" width="0.9" height="3.40" fill="#e5e5ea"/>
<rect x="462.18" y="108.30" width="1.1" height="6.00" fill="#f9c880"/>
<text transform="translate(462.88 115.8) rotate(-45)" font-size="2.0" fill="#555" text-anchor="end">05.06.2019</text>
<rect x="463.95" y="108.20" width="1" height="6.00" fill="#4ea2dc"/>
<rect x="464.95" y="105.10" width="1.1" height="9.30" fill="#f9c070"/>
<rect x="466.05" y="110.80" width="0.9" height="3.40" fill="#e5e5ea"/>
<rect x="466.85" y="108.30" width="1.1" height="6.00" fill="#f9c880"/>
<text transform="translate(467.55 115.8) rotate(-45)" font-size="2.0" fill="#555" text-anchor="end">06.06.2019</text>
<rect x="468.62" y="108.20" width="1" height="6.00" fill="#4ea2dc"/>
<rect x="469.62" y="105.04" width="1.1" height="9.36" fill="#f9c070"/>
<rect x="470.72" y="110.80" width="0.9" height="3.40" fill="#e5e5ea"/>
<rect x="471.52" y="108.30" width="1.1" height="6.00" fill="#f9c880"/>
<text transform="translate(472.22 115.8) rotate(-45)" font-size="2.0" fill="#555" text-anchor="end">07.06.2019</text>
<rect x="473.29" y="108.20" width="1" height="6.00" fill="#4ea2dc"/>
<rect x="474.29" y="104.98" width="1.1" height="9.42" fill="#f9c070"/>
<rect x="475.39" y="110.80" width="0.9" height="3.40" fill="#e5e5ea"/>
<rect x="476.19" y="108.30" width="1.1" height="6.00" fill="#f9c880"/>
<text transform="translate(476.89 115.8) rotate(-45)" font-size="2.0" fill="#555" text-anchor="end">08.06.2019</text>
<rect x="477.96" y="108.20" width="1" height="6.00" fill="#4ea2dc"/>
<rect x="478.96" y="104.92" width="1.1" height="9.48" fill="#f9c070"/>
<rect x="480.06" y="110.80" width="0.9" height="3.40" fill="#e5e5ea"/>
<rect x="480.86" y="108.30" width="1.1" height="6.00" fill="#f9c880"/>
<text transform="translate(481.56 115.8) rotate(-45)" font-size="2.0" fill="#555" text-anchor="end">09.06.2019</text>
<rect x="482.63" y="108.20" width="1" height="6.00" fill="#4ea2dc"/>
<rect x="483.63" y="104.86" width="1.1" height="9.54" fill="#f9c070"/>
<rect x="484.73" y="110.80" width="0.9" height="3.40" fill="#e5e5ea"/>
<rect x="485.53" y="108.30" width="1.1" height="6.00" fill="#f9c880"/>
<text transform="translate(486.23 115.8) rotate(-45)" font-size="2.0" fill="#555" text-anchor="end">10.06.2019</text>
<rect x="487.30" y="108.20" width="1" height="6.00" fill="#4ea2dc"/>
<rect x="488.30" y="104.80" width="1.1" height="9.60" fill="#f9c070"/>
<rect x="489.40" y="110.80" width="0.9" height="3.40" fill="#e5e5ea"/>
<rect x="490.20" y="108.30" width="1.1" height="6.00" fill="#f9c880"/>
<text transform="translate(490.90 115.8) rotate(-45)" font-size="2.0" fill="#555" text-anchor="end">11.06.2019</text>
<rect x="491.97" y="108.20" width="1" height="6.00" fill="#4ea2dc"/>
<rect x="492.97" y="104.74" width="1.1" height="9.66" fill="#f9c070"/>
<rect x="494.07" y="110.80" width="0.9" height="3.40" fill="#e5e5ea"/>
<rect x="494.87" y="108.30" width="1.1" height="6.00" fill="#f9c880"/>
<text transform="translate(495.57 115.8) rotate(-45)" font-size="2.0" fill="#555" text-anchor="end">12.06.2019</text>
<rect x="496.64" y="108.20" width="1" height="6.00" fill="#4ea2dc"/>
<rect x="497.64" y="104.68" width="1.1" height="9.72" fill="#f9c070"/>
<rect x="498.74" y="110.80" width="0.9" height="3.40" fill="#e5e5ea"/>
<rect x="499.54" y="108.30" width="1.1" height="6.00" fill="#f9c880"/>
<text transform="translate(500.24 115.8) rotate(-45)" font-size="2.0" fill="#555" text-anchor="end">13.06.2019</text>
<rect x="501.31" y="108.20" width="1" height="6.00" fill="#4ea2dc"/>
<rect x="502.31" y="104.62" width="1.1" height="9.78" fill="#f9c070"/>
<rect x="503.41" y="110.80" width="0.9" height="3.40" fill="#e5e5ea"/>
<rect x="504.21" y="108.30" width="1.1" height="6.00" fill="#f9c880"/>
<text transform="translate(504.91 115.8) rotate(-45)" font-size="2.0" fill="#555" text-anchor="end">14.06.2019</text>
<rect x="505.98" y="108.20" width="1" height="6.00" fill="#4ea2dc"/>
<rect x="506.98" y="104.56" width="1.1" height="9.84" fill="#f9c070"/>
<rect x="508.08" y="110.80" width="0.9" height="3.40" fill="#e5e5ea"/>
<rect x="508.88" y="108.30" width="1.1" height="6.00" fill="#f9c880"/>
<text transform="translate(509.58 115.8) rotate(-45)" font-size="2.0" fill="#555" text-anchor="end">15.06.2019</text>
<path d="M440,109.2 H511 M440,111.2 H511 M440,113 H511" stroke="#fff" stroke-width="0.5" stroke-dasharray="0.8 0.5" opacity="0.85"/>
<defs><radialGradient id="g4" cx="0.5" cy="0.5" r="0.75"><stop offset="0" stop-color="#eeeeee"/><stop offset="0.6" stop-color="#d4d4d4"/><stop offset="1" stop-color="#b4b4b4"/></radialGradient></defs>
<rect x="521" y="76.8" width="80" height="47.9" fill="url(#g4)"/>
<text x="561" y="83" font-size="3.1" font-weight="bold" fill="#222" text-anchor="middle" textLength="38" lengthAdjust="spacingAndGlyphs">Название диаграммы</text>
<path d="M526,92.8 H598 M526,94.8 H598 M526,96.6 H598" stroke="#fff" stroke-width="0.9" opacity="0.9"/>
<rect x="528.30" y="90.6" width="1" height="2.4" fill="#f9b65a"/>
<rect x="527.50" y="94.4" width="2.6" height="1" fill="#f9d39a"/>
<rect x="527.70" y="96.2" width="1" height="1" fill="#4cc3d9"/>
<rect x="529.10" y="96.6" width="1.3" height="1" fill="#f9b65a"/>
<text transform="translate(530.90 99.4) rotate(-45)" font-size="2.05" fill="#333" text-anchor="end">01.06.2019</text>
<rect x="532.97" y="90.6" width="1" height="2.4" fill="#f9b65a"/>
<rect x="532.17" y="94.4" width="2.6" height="1" fill="#f9d39a"/>
<rect x="532.37" y="96.2" width="1" height="1" fill="#4cc3d9"/>
<rect x="533.77" y="96.6" width="1.3" height="1" fill="#f9b65a"/>
<text transform="translate(535.57 99.4) rotate(-45)" font-size="2.05" fill="#333" text-anchor="end">02.06.2019</text>
<rect x="537.64" y="90.6" width="1" height="2.4" fill="#f9b65a"/>
<rect x="536.84" y="94.4" width="2.6" height="1" fill="#f9d39a"/>
<rect x="537.04" y="96.2" width="1" height="1" fill="#4cc3d9"/>
<rect x="538.44" y="96.6" width="1.3" height="1" fill="#f9b65a"/>
<text transform="translate(540.24 99.4) rotate(-45)" font-size="2.05" fill="#333" text-anchor="end">03.06.2019</text>
<rect x="542.31" y="90.6" width="1" height="2.4" fill="#f9b65a"/>
<rect x="541.51" y="94.4" width="2.6" height="1" fill="#f9d39a"/>
<rect x="541.71" y="96.2" width="1" height="1" fill="#4cc3d9"/>
<rect x="543.11" y="96.6" width="1.3" height="1" fill="#f9b65a"/>
<text transform="translate(544.91 99.4) rotate(-45)" font-size="2.05" fill="#333" text-anchor="end">04.06.2019</text>
<rect x="546.98" y="90.6" width="1" height="2.4" fill="#f9b65a"/>
<rect x="546.18" y="94.4" width="2.6" height="1" fill="#f9d39a"/>
<rect x="546.38" y="96.2" width="1" height="1" fill="#4cc3d9"/>
<rect x="547.78" y="96.6" width="1.3" height="1" fill="#f9b65a"/>
<text transform="translate(549.58 99.4) rotate(-45)" font-size="2.05" fill="#333" text-anchor="end">05.06.2019</text>
<rect x="551.65" y="90.6" width="1" height="2.4" fill="#f9b65a"/>
<rect x="550.85" y="94.4" width="2.6" height="1" fill="#f9d39a"/>
<rect x="551.05" y="96.2" width="1" height="1" fill="#4cc3d9"/>
<rect x="552.45" y="96.6" width="1.3" height="1" fill="#f9b65a"/>
<text transform="translate(554.25 99.4) rotate(-45)" font-size="2.05" fill="#333" text-anchor="end">06.06.2019</text>
<rect x="556.32" y="90.6" width="1" height="2.4" fill="#f9b65a"/>
<rect x="555.52" y="94.4" width="2.6" height="1" fill="#f9d39a"/>
<rect x="555.72" y="96.2" width="1" height="1" fill="#4cc3d9"/>
<rect x="557.12" y="96.6" width="1.3" height="1" fill="#f9b65a"/>
<text transform="translate(558.92 99.4) rotate(-45)" font-size="2.05" fill="#333" text-anchor="end">07.06.2019</text>
<rect x="560.99" y="90.6" width="1" height="2.4" fill="#f9b65a"/>
<rect x="560.19" y="94.4" width="2.6" height="1" fill="#f9d39a"/>
<rect x="560.39" y="96.2" width="1" height="1" fill="#4cc3d9"/>
<rect x="561.79" y="96.6" width="1.3" height="1" fill="#f9b65a"/>
<text transform="translate(563.59 99.4) rotate(-45)" font-size="2.05" fill="#333" text-anchor="end">08.06.2019</text>
<rect x="565.66" y="90.6" width="1" height="2.4" fill="#f9b65a"/>
<rect x="564.86" y="94.4" width="2.6" height="1" fill="#f9d39a"/>
<rect x="565.06" y="96.2" width="1" height="1" fill="#4cc3d9"/>
<rect x="566.46" y="96.6" width="1.3" height="1" fill="#f9b65a"/>
<text transform="translate(568.26 99.4) rotate(-45)" font-size="2.05" fill="#333" text-anchor="end">09.06.2019</text>
<rect x="570.33" y="90.6" width="1" height="2.4" fill="#f9b65a"/>
<rect x="569.53" y="94.4" width="2.6" height="1" fill="#f9d39a"/>
<rect x="569.73" y="96.2" width="1" height="1" fill="#4cc3d9"/>
<rect x="571.13" y="96.6" width="1.3" height="1" fill="#f9b65a"/>
<text transform="translate(572.93 99.4) rotate(-45)" font-size="2.05" fill="#333" text-anchor="end">10.06.2019</text>
<rect x="575.00" y="90.6" width="1" height="2.4" fill="#f9b65a"/>
<rect x="574.20" y="94.4" width="2.6" height="1" fill="#f9d39a"/>
<rect x="574.40" y="96.2" width="1" height="1" fill="#4cc3d9"/>
<rect x="575.80" y="96.6" width="1.3" height="1" fill="#f9b65a"/>
<text transform="translate(577.60 99.4) rotate(-45)" font-size="2.05" fill="#333" text-anchor="end">11.06.2019</text>
<rect x="579.67" y="90.6" width="1" height="2.4" fill="#f9b65a"/>
<rect x="578.87" y="94.4" width="2.6" height="1" fill="#f9d39a"/>
<rect x="579.07" y="96.2" width="1" height="1" fill="#4cc3d9"/>
<rect x="580.47" y="96.6" width="1.3" height="1" fill="#f9b65a"/>
<text transform="translate(582.27 99.4) rotate(-45)" font-size="2.05" fill="#333" text-anchor="end">12.06.2019</text>
<rect x="584.34" y="90.6" width="1" height="2.4" fill="#f9b65a"/>
<rect x="583.54" y="94.4" width="2.6" height="1" fill="#f9d39a"/>
<rect x="583.74" y="96.2" width="1" height="1" fill="#4cc3d9"/>
<rect x="585.14" y="96.6" width="1.3" height="1" fill="#f9b65a"/>
<text transform="translate(586.94 99.4) rotate(-45)" font-size="2.05" fill="#333" text-anchor="end">13.06.2019</text>
<rect x="589.01" y="90.6" width="1" height="2.4" fill="#f9b65a"/>
<rect x="588.21" y="94.4" width="2.6" height="1" fill="#f9d39a"/>
<rect x="588.41" y="96.2" width="1" height="1" fill="#4cc3d9"/>
<rect x="589.81" y="96.6" width="1.3" height="1" fill="#f9b65a"/>
<text transform="translate(591.61 99.4) rotate(-45)" font-size="2.05" fill="#333" text-anchor="end">14.06.2019</text>
<rect x="593.68" y="90.6" width="1" height="2.4" fill="#f9b65a"/>
<rect x="592.88" y="94.4" width="2.6" height="1" fill="#f9d39a"/>
<rect x="593.08" y="96.2" width="1" height="1" fill="#4cc3d9"/>
<rect x="594.48" y="96.6" width="1.3" height="1" fill="#f9b65a"/>
<text transform="translate(596.28 99.4) rotate(-45)" font-size="2.05" fill="#333" text-anchor="end">15.06.2019</text>
<rect x="543.6" y="110.39999999999999" width="1.2" height="1.2" fill="#4cc3d9"/>
<text x="545.4" y="111.6" font-size="1.9" fill="#444" textLength="33.4" lengthAdjust="spacingAndGlyphs">Продажи по Торговой точке 1, тыс. руб.</text>
<rect x="543.6" y="114.3" width="1.2" height="1.2" fill="#f9b65a"/>
<text x="545.4" y="115.5" font-size="1.9" fill="#444" textLength="33.4" lengthAdjust="spacingAndGlyphs">Продажи по Торговой точке 2, тыс. руб.</text>
<rect x="543.6" y="118.19999999999999" width="1.2" height="1.2" fill="#e8e8e8"/>
<text x="545.4" y="119.39999999999999" font-size="1.9" fill="#444" textLength="33.4" lengthAdjust="spacingAndGlyphs">Продажи по Торговой точке 3, тыс. руб.</text>
<rect x="543.6" y="122.1" width="1.2" height="1.2" fill="#f9c880"/>
<text x="545.4" y="123.3" font-size="1.9" fill="#444" textLength="33.4" lengthAdjust="spacingAndGlyphs">Продажи по Торговой точке 4, тыс. руб.</text>
<rect x="694.5" y="71.5" width="16" height="20" fill="#f3f3f3" stroke="#dadada" stroke-width="1"/>
<path d="M697.2,84.6 L702.6,79.2 L708,84.6" fill="none" stroke="#cdcdcd" stroke-width="1.1"/>
<rect x="694.5" y="91.5" width="16" height="19" fill="#f3f3f3" stroke="#ababab" stroke-width="1"/>
<path d="M697.2,98 L702.6,103.4 L708,98" fill="none" stroke="#444" stroke-width="1.1"/>
<rect x="694.5" y="110.5" width="16" height="20" fill="#f3f3f3" stroke="#ababab" stroke-width="1"/>
<path d="M696.5,113.8 H708.8" stroke="#333" stroke-width="1.3"/>
<path d="M697.2,117.4 L702.6,122.8 L708,117.4" fill="none" stroke="#444" stroke-width="1.1"/>
<rect x="740.6" y="73.6" width="28" height="25" fill="#fff" stroke="#8a8a8a" stroke-width="1"/>
<rect x="740.2" y="73.2" width="28.8" height="4.3" fill="#7b7b7b"/>
<path d="M743,75.3 H766" stroke="#a8a8a8" stroke-width="0.9" stroke-dasharray="0.9 0.9"/>
<path d="M747.5,77.5 V98.6 M754.6,77.5 V98.6 M761.7,77.5 V98.6 M740.6,82.4 H768.6 M740.6,87.3 H768.6 M740.6,92.4 H768.6" stroke="#9c9c9c" stroke-width="0.9"/>
<rect x="744" y="80" width="15" height="15" fill="#fff"/>
<path d="M750.2,92.5 H761.8 V82.4 H757.5 M754.5,92.5 V87.3 H761.8" fill="none" stroke="#ff7f1e" stroke-width="1.1"/>
<path d="M748.2,91.6 C747.4,86.4 750.6,83 756.4,83" fill="none" stroke="#0e70c7" stroke-width="2"/>
<path d="M753.8,79.4 L758.2,82.9 L754.2,86.4" fill="none" stroke="#0e70c7" stroke-width="1.7"/>
<path d="M743.6,88.6 L747.6,93.6 L751.4,89.2" fill="none" stroke="#0e70c7" stroke-width="1.7"/>
<rect x="791.4" y="74.6" width="28.4" height="24" fill="#fff" stroke="#8a8a8a" stroke-width="1"/>
<rect x="791" y="74.2" width="29.2" height="4.2" fill="#7b7b7b"/>
<path d="M794,76.3 H817" stroke="#a8a8a8" stroke-width="0.9" stroke-dasharray="0.9 0.9"/>
<path d="M798.7,78.4 V98.6 M805.7,78.4 V98.6 M812.7,78.4 V98.6 M791.4,83.4 H819.8 M791.4,88.4 H819.8 M791.4,93.4 H819.8" stroke="#9c9c9c" stroke-width="0.9"/>
<path d="M812.6,87 V83.4 H798.5 V93.5 H805" fill="none" stroke="#ff7f1e" stroke-width="1.1"/>
<rect x="805.4" y="87.7" width="16.4" height="14.8" fill="#fff" stroke="#7b7b7b" stroke-width="1.1"/>
<rect x="807.5" y="93.7" width="2.3999999999999773" height="8.099999999999994" fill="#fff" stroke="#6f6f6f" stroke-width="0.8"/>
<rect x="810.4" y="90.6" width="3.0" height="11.200000000000003" fill="#dcdcdc" stroke="#6f6f6f" stroke-width="0.8"/>
<rect x="814" y="93.7" width="2.7000000000000455" height="8.099999999999994" fill="#fff" stroke="#6f6f6f" stroke-width="0.8"/>
<rect x="816.9" y="95.6" width="2.6000000000000227" height="6.200000000000003" fill="#dcdcdc" stroke="#6f6f6f" stroke-width="0.8"/>
<rect x="876" y="82" width="7" height="18" fill="#0e70c7"/>
<rect x="879" y="85.2" width="1" height="1" fill="#6fd08c"/>
<rect x="879" y="88.2" width="1" height="1" fill="#6fd08c"/>
<rect x="879" y="91.2" width="1" height="1" fill="#6fd08c"/>
<rect x="879" y="94.2" width="1" height="1" fill="#6fd08c"/>
<rect x="879" y="97.2" width="1" height="1" fill="#6fd08c"/>
<rect x="884" y="74" width="7" height="26" fill="#f8cc8a"/>
<rect x="892" y="79" width="7" height="21" fill="#737373"/>
<rect x="896" y="81" width="1" height="1" fill="#a9a9a9"/>
<rect x="894" y="83" width="1" height="1" fill="#a9a9a9"/>
<rect x="897" y="84" width="1" height="1" fill="#a9a9a9"/>
<rect x="895" y="86" width="1" height="1" fill="#a9a9a9"/>
<rect x="897" y="88" width="1" height="1" fill="#a9a9a9"/>
<rect x="894" y="89" width="1" height="1" fill="#a9a9a9"/>
<rect x="896" y="91" width="1" height="1" fill="#a9a9a9"/>
<rect x="895" y="93" width="1" height="1" fill="#a9a9a9"/>
<rect x="897" y="95" width="1" height="1" fill="#a9a9a9"/>
<rect x="894" y="96" width="1" height="1" fill="#a9a9a9"/>
<rect x="896" y="98" width="1" height="1" fill="#a9a9a9"/>
<path d="M969.5,74.5 H996.5 V94.8 H988.6 L985.6,98.2 H969.5 Z" fill="#fff" stroke="#7b7b7b" stroke-width="1"/>
<path d="M977.4,98.2 L980.4,94.8 H988.6" fill="none" stroke="#7b7b7b" stroke-width="1"/>
<rect x="977.6" y="95.4" width="8" height="3" fill="#f3f3f3" stroke="none"/>
<path d="M977.2,98.3 L980.2,94.9 H988.8 L985.8,98.3 Z" fill="#f3f3f3" stroke="#7b7b7b" stroke-width="0.9"/>
<rect x="974.5" y="82.5" width="3.8999999999999773" height="8.5" fill="#fff" stroke="#6f6f6f" stroke-width="0.9"/>
<rect x="978.6" y="77.6" width="3.699999999999932" height="13.400000000000006" fill="#dcdcdc" stroke="#6f6f6f" stroke-width="0.9"/>
<rect x="984.6" y="81.6" width="3.8999999999999773" height="9.400000000000006" fill="#fff" stroke="#6f6f6f" stroke-width="0.9"/>
<rect x="988.7" y="84.5" width="3.699999999999932" height="6.5" fill="#dcdcdc" stroke="#6f6f6f" stroke-width="0.9"/>
<path d="M1047.8,152.6 L1052.8,147.8 L1057.8,152.6" fill="none" stroke="#444" stroke-width="1.1"/>
</svg>
<svg style="left:788px;top:300px" width="30" height="110" viewBox="788 300 30 110"><path d="M800,306 H804 V311 H809 V315 H804 V320 H800 V315 H795 V311 H800 Z" fill="#4aad8c"/><path d="M810.8,343 L811,348 L804.8,354 L802.4,351.6 Z" fill="#6f6f6f"/><path d="M802,352 C804.6,352.4 805.4,355.4 803.4,357.4 C801.4,359.2 798,358.8 794,358.8 C796.6,357.4 797.6,352.4 802,352 Z" fill="#1173c9"/><circle cx="801.6" cy="355.6" r="1.5" fill="#cfe6fb"/><path d="M793.2,381.6 H810.8 L804,389.6 V396.8 H800 V389.6 Z" fill="#7b7b7b"/><path d="M796,383.2 H808" stroke="#b5b5b5" stroke-width="0.9" stroke-dasharray="1 1"/><rect x="801.2" y="390" width="1.6" height="6" fill="#fff"/></svg>
<div class="a" style="left:1px;top:65px;width:1px;height:650px;background:#fbf7f9"></div>
<div class="a" style="left:1065px;top:65px;width:1px;height:650px;background:#fbf7f9"></div>
<div class="a" style="left:1px;top:714px;width:1065px;height:1px;background:#fbf7f9"></div>
<div class="a" style="left:0;top:0;width:1px;height:716px;background:#017441"></div>
<div class="a" style="left:1066px;top:0;width:1px;height:716px;background:#017441"></div>
<div class="a" style="left:0;top:715px;width:1067px;height:1px;background:#017441"></div>
</body></html>
